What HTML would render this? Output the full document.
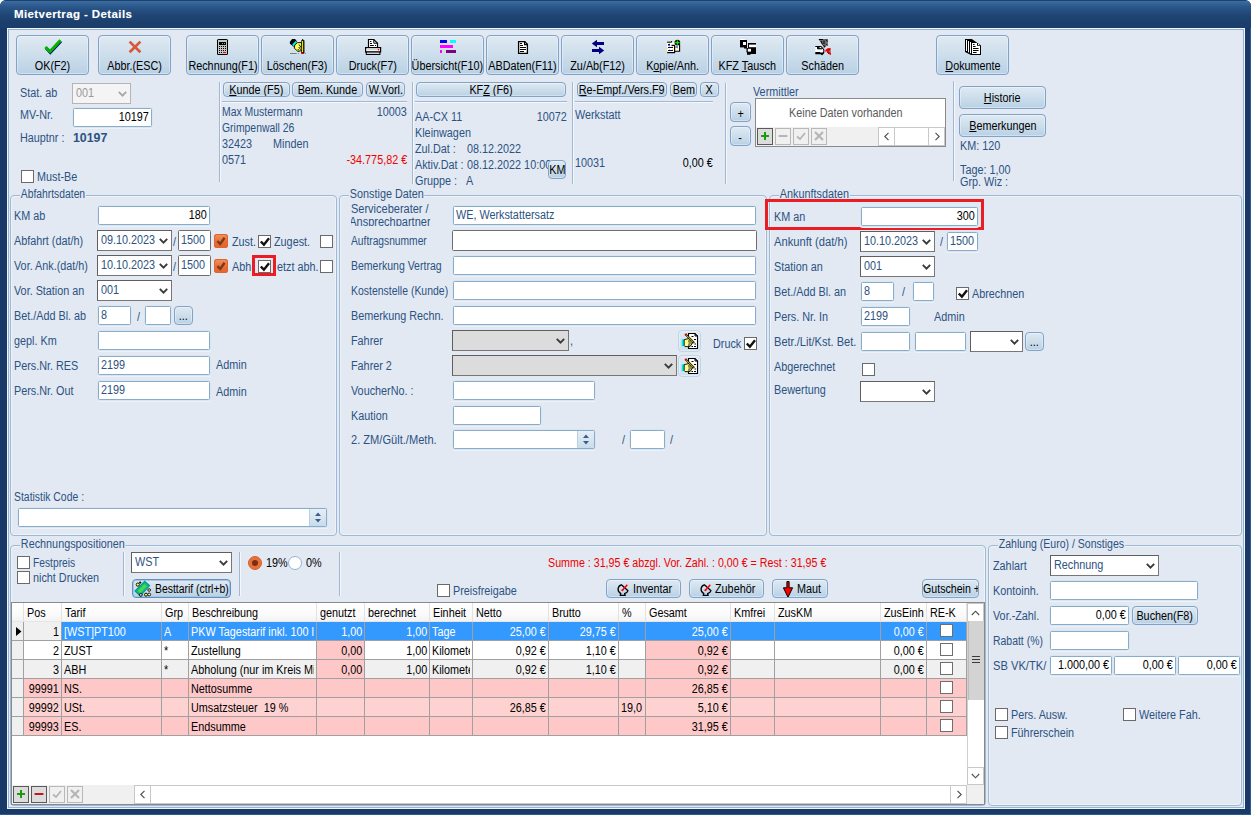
<!DOCTYPE html>
<html><head><meta charset="utf-8"><title>Mietvertrag - Details</title>
<style>
html,body{margin:0;padding:0}
html{background:#fff}
body{width:1251px;height:815px;overflow:hidden;position:relative;background:#193a68;box-shadow:inset -1px -1px 0 #2d5c92;border-radius:6px 6px 0 0;font-family:"Liberation Sans",sans-serif;font-size:12.5px;color:#000}
.t{display:inline-block;transform:scaleX(.865);transform-origin:0 50%;white-space:nowrap}
.t.tr{transform-origin:100% 50%}
.t.tc{transform-origin:50% 50%}
#title{position:absolute;left:0;top:0;width:1251px;height:28px;border-radius:6px 6px 0 0;background:linear-gradient(#1d3f6d 0,#1d3f6d 1px,#3d6ea0 1px,#35659a 3px,#2a568a 7px,#204776 14px,#1c3f6d 22px,#1b3d6a 28px)}
#title span{position:absolute;left:14px;top:7px;font-weight:bold;font-size:11.5px;line-height:14px;color:#fff;letter-spacing:.4px;text-shadow:0 0 1px rgba(255,255,255,.3)}
#cl{position:absolute;left:7px;top:28px;width:1238px;height:781px;box-sizing:border-box;border:1px solid #f2f6fa;background:#e2e9f2}
#cl2{position:absolute;left:8px;top:29px;width:1236px;height:779px;box-sizing:border-box;border:1px solid #94b3d1}
.l{position:absolute;white-space:nowrap;line-height:14px;color:#2c5282}
.bk,.i.bk{color:#000}
.red{color:#f00000}
.i{position:absolute;box-sizing:border-box;border:1px solid #88adcc;border-radius:1.5px;background:#fff;white-space:nowrap;overflow:hidden;padding:0 2px;color:#2c5282;box-shadow:0 0 0 1px #dae5ef,0 1px 0 1px #edf2f8}
.i.dk{border-color:#6e6e6e;box-shadow:none}
.c{position:absolute;box-sizing:border-box;border:1px solid #5f5f5f;background:#fff;white-space:nowrap;overflow:hidden;padding:0 3px;color:#2c5282;border-bottom-color:#777;border-right-color:#777}
.c .cv{position:absolute;right:3px;top:50%;margin-top:-3px}
.c.dis .cv path{stroke:#a8a8a8}
.c.dis{background:#f4f4f4;border-color:#b5b5b5;color:#9a9a9a}
.c.gr{background:#dcdcdc}
.b{position:absolute;box-sizing:border-box;border:1px solid #7fa3c9;border-radius:4px;background:linear-gradient(#dfe9f2,#cfdfec 45%,#b9d1e5);text-align:center;white-space:nowrap;color:#000;overflow:hidden;box-shadow:inset 0 0 0 1px rgba(255,255,255,.35)}
.b.sm{border-radius:4px}
.tb .ic{position:absolute;left:0;right:0;top:3px;height:18px;display:flex;align-items:center;justify-content:center}
.tb .tx{position:absolute;left:-40px;right:-40px;top:23px;line-height:14px}
u{text-decoration:underline}
.k{position:absolute;box-sizing:border-box;border:1px solid #6a6a6a;background:#fff}
.k svg{position:absolute;left:0;top:0}
.ok{position:absolute;width:14px;height:14px;border-radius:3px;background:linear-gradient(#f39463,#e86f38 50%,#e2642c);box-shadow:inset 0 0 0 1px #dc6632}
.g{position:absolute;box-sizing:border-box;border:1px solid #9db9d5;border-radius:4px;box-shadow:inset 1px 1px 0 #eef3f8, inset -1px -1px 0 #eef3f8}
.gt{background:#e2e9f2;padding:0 1px;transform:scaleX(.865);transform-origin:0 50%}
.sp{position:absolute;right:0;top:0;bottom:0;width:16px;background:linear-gradient(#e6eef6,#c9dcec);border-left:1px solid #b9cfe4}
table{border-collapse:collapse}
</style></head><body>
<div id="title"><span>Mietvertrag - Details</span></div>
<div id="cl"></div><div id="cl2"></div>

<div class="b tb" style="left:16px;top:35px;width:73px;height:40px"><div class="tx"><span class="t tc">OK(F2)</span></div></div>
<svg style="position:absolute;left:40px;top:36px" width="26" height="20" viewBox="40 36 26 20"><path d="M45.9 47.8 L50.3 52.6 L60.9 41.2" fill="none" stroke="#000080" stroke-width="3"/><path d="M45.4 47 L50 51.6 L60.5 40.4" fill="none" stroke="#00b400" stroke-width="3"/></svg>
<div class="b tb" style="left:98px;top:35px;width:73px;height:40px"><div class="tx"><span class="t tc">Abbr.(ESC)</span></div></div>
<svg style="position:absolute;left:125px;top:38px" width="20" height="18" viewBox="125 38 20 18"><path d="M129.6 41.6 L140.4 52.2 M140.4 41.6 L129.6 52.2" fill="none" stroke="#d9573a" stroke-width="2.7"/></svg>
<div class="b tb" style="left:186px;top:35px;width:73px;height:40px"><div class="tx"><span class="t tc">Rechnung(F1)</span></div></div>
<svg style="position:absolute;left:216px;top:38px" width="14" height="18" viewBox="216 38 14 18"><rect x="217" y="39" width="11" height="16" rx="1.6" fill="#000"/><rect x="218" y="40" width="9" height="14" fill="#c4c4c4"/><rect x="219" y="42" width="7" height="3" fill="#000"/><rect x="222" y="43" width="1" height="1" fill="#00e8e8"/><rect x="224" y="43" width="1" height="1" fill="#00e8e8"/><g fill="#000"><rect x="219" y="46" width="1" height="1"/><rect x="221" y="46" width="1" height="1"/><rect x="223" y="46" width="1" height="1"/><rect x="225" y="46" width="1" height="1"/><rect x="219" y="48" width="1" height="1"/><rect x="221" y="48" width="1" height="1"/><rect x="223" y="48" width="1" height="1"/><rect x="225" y="48" width="1" height="1"/><rect x="219" y="50" width="1" height="1"/><rect x="221" y="50" width="1" height="1"/><rect x="223" y="50" width="1" height="1"/><rect x="225" y="50" width="1" height="1"/><rect x="219" y="52" width="1" height="1"/><rect x="221" y="52" width="1" height="1"/></g><rect x="223" y="52" width="3" height="1" fill="#f00"/></svg>
<div class="b tb" style="left:261px;top:35px;width:73px;height:40px"><div class="tx"><span class="t tc">Löschen(F3)</span></div></div>
<svg style="position:absolute;left:284px;top:36px" width="30" height="22" viewBox="0 0 30 22"><polygon points="5.9,5.7 8.1,3 11.1,3 13,5.4 9.7,10.8 5.9,7.8" fill="#000"/><polygon points="8.1,8.4 11.6,5 13.2,6.6 9.7,10.3" fill="#00f0f0"/><polygon points="10.8,8.9 13.5,6.6 17.3,6.6 18.6,12.2 18.6,14.3 14,15.5 10.3,12.2" fill="#ffff55" stroke="#000" stroke-width=".9"/><path d="M15 8.5 L17.5 12 M14.8 11 L16.8 13.8 M13.8 13 L15 14.6" stroke="#000" stroke-width=".9"/><rect x="17.7" y="4.6" width="2.2" height="12" fill="#ff0" stroke="#000" stroke-width=".8"/><rect x="18.2" y="3" width="1" height="1.8" fill="#000"/><rect x="19.3" y="4.6" width="0.9" height="12.4" fill="#000"/><rect x="17" y="16.9" width="3.2" height="1.1" fill="#f00"/><rect x="6" y="17" width="6.7" height="1" fill="#808080"/><rect x="14" y="17" width="1" height="1" fill="#909090"/><rect x="21" y="17" width="1" height="1" fill="#909090"/></svg>
<div class="b tb" style="left:336px;top:35px;width:73px;height:40px"><div class="tx"><span class="t tc">Druck(F7)</span></div></div>
<svg style="position:absolute;left:358px;top:36px" width="30" height="22" viewBox="0 0 30 22"><polygon points="10.5,3.5 15.8,3.5 19.5,7.2 19.5,11.5 10.5,11.5" fill="#fff" stroke="#000" stroke-width="1.2"/><path d="M15.8 3.5 V7.2 H19.5" fill="none" stroke="#000" stroke-width="1"/><path d="M12 5.5 H13.4 M12 7.5 H14 M12 9.5 H15.8 M17 9.5 H18" stroke="#000" stroke-width="1"/><rect x="7.6" y="11.6" width="15" height="4.4" fill="#fff" stroke="#000" stroke-width="1.2"/><path d="M9.5 13.6 H19" stroke="#bbb" stroke-width="1.4" stroke-dasharray="1.2 .8"/><circle cx="20.5" cy="13.6" r=".9" fill="#f00"/><rect x="8.3" y="16" width="13.6" height="2.5" fill="#d4d4d4" stroke="#000" stroke-width="1"/></svg>
<div class="b tb" style="left:411px;top:35px;width:73px;height:40px"><div class="tx"><span class="t tc">Übersicht(F10)</span></div></div>
<svg style="position:absolute;left:438px;top:38px" width="20" height="17" viewBox="438 38 20 17" shape-rendering="crispEdges"><rect x="440" y="40" width="7" height="3" fill="#0000ff"/><rect x="450" y="40" width="6" height="3" fill="#00ffff"/><rect x="440" y="45" width="13" height="3" fill="#ff00ff"/><rect x="440" y="50" width="2" height="3" fill="#ff00ff"/><rect x="446" y="50" width="10" height="3" fill="#800080"/></svg>
<div class="b tb" style="left:486px;top:35px;width:73px;height:40px"><div class="tx"><span class="t tc">ABDaten(F11)</span></div></div>
<svg style="position:absolute;left:516px;top:39px" width="14" height="17" viewBox="516 39 14 17"><polygon points="518.6,41.6 524.8,41.6 527.4,44.2 527.4,53.4 518.6,53.4" fill="#fff" stroke="#000" stroke-width="1.3"/><path d="M524.6 41.6 V44.6 H527.4" fill="none" stroke="#000" stroke-width="1.2"/><path d="M520 43.5 H522 M520 45.5 H523 M520 47.5 H526 M520 49.5 H526 M520 51.5 H524" stroke="#000" stroke-width="1"/></svg>
<div class="b tb" style="left:561px;top:35px;width:73px;height:40px"><div class="tx"><span class="t tc">Zu/Ab(F12)</span></div></div>
<svg style="position:absolute;left:590px;top:38px" width="16" height="18" viewBox="590 38 16 18"><polygon points="591.8,43.5 597,39.8 597,42 604,42 604,45 597,45 597,47.2" fill="#000080"/><polygon points="604.2,50.5 599,46.8 599,49 592,49 592,52 599,52 599,54.2" fill="#000080"/></svg>
<div class="b tb" style="left:636px;top:35px;width:73px;height:40px"><div class="tx"><span class="t tc">K<u>o</u>pie/Anh.</span></div></div>
<svg style="position:absolute;left:657px;top:36px" width="30" height="22" viewBox="0 0 30 22"><rect x="17.5" y="6" width="5" height="9" fill="#fff"/><path d="M22.6 8 V15.2 H17.5" fill="none" stroke="#000" stroke-width="1.1"/><path d="M18.5 8.5 H20 M18.5 11 H21" stroke="#000090" stroke-width="1"/><rect x="10" y="6.5" width="7.5" height="10" fill="#fff"/><path d="M10 6.2 H14.6 L14.6 5" fill="none" stroke="#000" stroke-width="1"/><path d="M14.5 9.3 H17.6 V16.6 H10" fill="none" stroke="#000" stroke-width="1.2"/><rect x="11" y="8" width="2" height="1.6" fill="#000090"/><path d="M11 11.5 H16 M11 14.5 H16" stroke="#000090" stroke-width="1"/><g fill="#f5e500"><rect x="12" y="7" width="1" height="1"/><rect x="15" y="8" width="1" height="1"/><rect x="10" y="12" width="1" height="1"/><rect x="12" y="13" width="1" height="1"/><rect x="15" y="13" width="1" height="1"/><rect x="10" y="15.3" width="1" height="1"/><rect x="12" y="10" width="1" height="1"/><rect x="15" y="10" width="1" height="1"/><rect x="18" y="13" width="1" height="1"/><rect x="20" y="12" width="1" height="1"/><rect x="17" y="5" width="1" height="1"/></g><circle cx="20.4" cy="6.6" r="2.8" fill="#000"/><path d="M20.4 4.4 V8.8 M18.2 6.6 H22.6" stroke="#00f000" stroke-width="1.3"/></svg>
<div class="b tb" style="left:711px;top:35px;width:73px;height:40px"><div class="tx"><span class="t tc">KFZ <u>T</u>ausch</span></div></div>
<svg style="position:absolute;left:738px;top:38px" width="20" height="18" viewBox="738 38 20 18"><rect x="740" y="40" width="7" height="7.4" fill="#000"/><rect x="740.3" y="39" width="4.5" height="1" fill="#fff"/><rect x="743" y="42" width="3" height="3" fill="#fff"/><rect x="744" y="47" width="3" height="1.5" fill="#000"/><rect x="748" y="43" width="8" height="11" fill="#000"/><rect x="749" y="44.6" width="7" height="2.6" fill="#fff"/><rect x="746.5" y="48" width="5" height="4.5" fill="#000"/><rect x="747.8" y="48.8" width="3.2" height="2.8" fill="#fff"/><rect x="747" y="52" width="3.5" height="2.8" fill="#000"/></svg>
<div class="b tb" style="left:786px;top:35px;width:73px;height:40px"><div class="tx"><span class="t tc">Schäden</span></div></div>
<svg style="position:absolute;left:807px;top:36px" width="30" height="22" viewBox="0 0 30 22"><polygon points="11.3,3 21,3 20.8,8.5 17,12.6 15.5,9" fill="#6c6c6c"/><path d="M12 3.5 H16 M14 5 L15.5 8.5 M17 4.5 V8 M19 3.5 L20.5 5.5 M16.5 9 L18 11 M19.5 8 L20.5 9.5" stroke="#000" stroke-width="1"/><path d="M8.3 10.5 H14 L16.8 13.6 V16.2 L15.6 17.6 H8.3" fill="#fff" stroke="#000" stroke-width="1.1"/><path d="M10.5 10.6 V12.8 H15 M8.3 16.5 H13 L14.5 18.6 H15.6 L16.6 16.5" fill="#000" stroke="#000" stroke-width="1"/><polygon points="18.3,14 20.5,12.3 23.6,12 23.8,13.5 22,14.8 24,17 24,19 22.5,18.6 21,16.8 19.8,15.6 18.2,15.8" fill="#f00"/><path d="M22 13 L23.5 15.5 M20 16 L22 18" stroke="#222" stroke-width=".9"/></svg>
<div class="b tb" style="left:936px;top:35px;width:73px;height:40px"><div class="tx"><span class="t tc"><u>D</u>okumente</span></div></div>
<svg style="position:absolute;left:957px;top:36px" width="30" height="22" viewBox="0 0 30 22"><polygon points="8,3 14.8,3 24,9.4 24,19 14,19 8,16" fill="#000"/><rect x="9" y="4" width="1" height="11" fill="#fff"/><rect x="11" y="5" width="1" height="11.3" fill="#fff"/><rect x="13" y="6" width="1" height="11.3" fill="#fff"/><polygon points="15,7 20,7 20,9.7 23,9.7 23,18 15,18" fill="#fff"/><rect x="21" y="8" width="1" height="1" fill="#fff"/><path d="M16 8.5 H17.6 M16 10.5 H18.6 M16 12.5 H21.6 M16 14.5 H21.6 M16 16.5 H19.6" stroke="#000" stroke-width="1"/></svg>
<div class="l " style="left:20px;top:86px;"><span class="t">Stat. ab</span></div>
<div class="c dis" style="left:72px;top:83px;width:59px;height:21px;line-height:18px;"><span class="t">001</span><svg class="cv" width="9" height="6" viewBox="0 0 9 6"><path d="M0.8 0.8 L4.5 4.6 L8.2 0.8" fill="none" stroke="#3a3a3a" stroke-width="1.9"/></svg></div>
<div class="l " style="left:20px;top:108px;"><span class="t">MV-Nr.</span></div>
<div class="i bk" style="left:73px;top:108px;width:79px;height:19px;line-height:17px;"><div style="position:absolute;right:2px;top:0"><span class="t tr">10197</span></div></div>
<div class="l " style="left:20px;top:131px;"><span class="t">Hauptnr :</span></div>
<div class="l " style="left:73px;top:131px;font-weight:bold;font-size:13px"><span class="t" style="transform:scaleX(0.95)">10197</span></div>
<div class="k" style="left:21px;top:170px;width:13px;height:13px"></div>
<div class="l " style="left:37px;top:170px;"><span class="t">Must-Be</span></div>
<div style="position:absolute;left:219px;top:82px;width:1px;height:100px;background:#9fb8d3;box-shadow:1px 0 0 #f4f8fc"></div>
<div class="b sm" style="left:223px;top:82px;width:67px;height:15px;line-height:13px;"><div style="position:absolute;left:-40px;right:-40px;top:1px"><span class="t tc"><u>K</u>unde (F5)</span></div></div>
<div class="b sm" style="left:292px;top:82px;width:71px;height:15px;line-height:13px;"><div style="position:absolute;left:-40px;right:-40px;top:1px"><span class="t tc">Bem. Kunde</span></div></div>
<div class="b sm" style="left:366px;top:82px;width:39px;height:15px;line-height:13px;"><div style="position:absolute;left:-40px;right:-40px;top:1px"><span class="t tc">W.Vorl.</span></div></div>
<div style="position:absolute;left:222px;top:101px;height:1px;width:185px;background:#9fb8d3;box-shadow:0 1px 0 #f4f8fc"></div>
<div class="l " style="left:222px;top:105px;"><span class="t" style="transform:scaleX(0.834)">Max Mustermann</span></div>
<div class="l " style="right:844px;top:105px;"><span class="t tr">10003</span></div>
<div class="l " style="left:222px;top:121px;"><span class="t" style="transform:scaleX(0.833)">Grimpenwall 26</span></div>
<div class="l " style="left:222px;top:137px;"><span class="t">32423</span></div>
<div class="l " style="left:273px;top:137px;"><span class="t">Minden</span></div>
<div class="l " style="left:222px;top:153px;"><span class="t">0571</span></div>
<div class="l red" style="right:844px;top:153px;"><span class="t tr">-34.775,82 €</span></div>
<div style="position:absolute;left:412px;top:82px;width:1px;height:102px;background:#9fb8d3;box-shadow:1px 0 0 #f4f8fc"></div>
<div class="b sm" style="left:416px;top:82px;width:150px;height:15px;line-height:13px;"><div style="position:absolute;left:-40px;right:-40px;top:1px"><span class="t tc">KF<u>Z</u> (F6)</span></div></div>
<div style="position:absolute;left:415px;top:101px;height:1px;width:152px;background:#9fb8d3;box-shadow:0 1px 0 #f4f8fc"></div>
<div class="l " style="left:415px;top:110px;"><span class="t">AA-CX 11</span></div>
<div class="l " style="right:684px;top:110px;"><span class="t tr">10072</span></div>
<div class="l " style="left:415px;top:126px;"><span class="t">Kleinwagen</span></div>
<div class="l " style="left:415px;top:142px;"><span class="t">Zul.Dat :</span></div>
<div class="l " style="left:467px;top:142px;"><span class="t">08.12.2022</span></div>
<div class="l " style="left:415px;top:158px;"><span class="t">Aktiv.Dat :</span></div>
<div class="l " style="left:467px;top:158px;"><span class="t">08.12.2022 10:00</span></div>
<div class="l " style="left:415px;top:174px;"><span class="t">Gruppe :</span></div>
<div class="l " style="left:466px;top:174px;"><span class="t">A</span></div>
<div class="b sm" style="left:548px;top:160px;width:18px;height:19px;line-height:17px;border-radius:4px"><div style="position:absolute;left:-40px;right:-40px;top:1px"><span class="t tc">KM</span></div></div>
<div style="position:absolute;left:572px;top:82px;width:1px;height:102px;background:#9fb8d3;box-shadow:1px 0 0 #f4f8fc"></div>
<div class="b sm" style="left:577px;top:82px;width:90px;height:15px;line-height:13px;"><div style="position:absolute;left:-40px;right:-40px;top:1px"><span class="t tc"><u>R</u>e-Empf./Vers.F9</span></div></div>
<div class="b sm" style="left:670px;top:82px;width:27px;height:15px;line-height:13px;"><div style="position:absolute;left:-40px;right:-40px;top:1px"><span class="t tc">Bem</span></div></div>
<div class="b sm" style="left:700px;top:82px;width:19px;height:15px;line-height:13px;"><div style="position:absolute;left:-40px;right:-40px;top:1px"><span class="t tc">X</span></div></div>
<div style="position:absolute;left:575px;top:101px;height:1px;width:138px;background:#9fb8d3;box-shadow:0 1px 0 #f4f8fc"></div>
<div class="l " style="left:575px;top:108px;"><span class="t">Werkstatt</span></div>
<div class="l " style="left:575px;top:156px;"><span class="t">10031</span></div>
<div class="l bk" style="right:538px;top:156px;"><span class="t tr">0,00 €</span></div>
<div style="position:absolute;left:725px;top:83px;width:1px;height:101px;background:#9fb8d3;box-shadow:1px 0 0 #f4f8fc"></div>
<div class="b " style="left:730px;top:102px;width:21px;height:20px;line-height:18px;"><div style="position:absolute;left:-40px;right:-40px;top:2px"><span class="t tc">+</span></div></div>
<div class="b " style="left:730px;top:126px;width:21px;height:20px;line-height:18px;"><div style="position:absolute;left:-40px;right:-40px;top:2px"><span class="t tc">-</span></div></div>
<div class="l " style="left:753px;top:85px;"><span class="t">Vermittler</span></div>
<div style="position:absolute;left:755px;top:98px;width:191px;height:49px;box-sizing:border-box;border:1px solid #8a8a8a;background:#fff"><div style="position:absolute;left:0;right:0;top:28px;bottom:0;background:#f0f0f0"></div></div>
<div class="l " style="left:789px;top:106px;color:#5a5a5a"><span class="t">Keine Daten vorhanden</span></div>
<div style="position:absolute;left:757px;top:128px;width:16px;height:17px;box-sizing:border-box;border:1px solid #5a5a5a;background:#dcdcdc"><svg width="16" height="16" viewBox="0 0 16 16" style="position:absolute;left:-1px;top:-1px"><path d="M8 4 V12 M4 8 H12" stroke="#1d9a12" stroke-width="2"/></svg></div>
<div style="position:absolute;left:775px;top:128px;width:16px;height:17px;box-sizing:border-box;border:1px solid #b8b8b8;background:#f0f0f0"><svg width="16" height="16" viewBox="0 0 16 16" style="position:absolute;left:-1px;top:-1px"><path d="M3.6 8 H12.4" stroke="#b5b5b5" stroke-width="2"/></svg></div>
<div style="position:absolute;left:793px;top:128px;width:16px;height:17px;box-sizing:border-box;border:1px solid #b8b8b8;background:#f0f0f0"><svg width="16" height="16" viewBox="0 0 16 16" style="position:absolute;left:-1px;top:-1px"><path d="M4 8.5 L7 11 L12 5" fill="none" stroke="#b5b5b5" stroke-width="1.8"/></svg></div>
<div style="position:absolute;left:811px;top:128px;width:16px;height:17px;box-sizing:border-box;border:1px solid #b8b8b8;background:#f0f0f0"><svg width="16" height="16" viewBox="0 0 16 16" style="position:absolute;left:-1px;top:-1px"><path d="M4 4 L12 12 M12 4 L4 12" stroke="#b5b5b5" stroke-width="2.2"/></svg></div>
<div style="position:absolute;left:878px;top:127px;width:67px;height:19px;background:#fff;box-sizing:border-box;border:1px solid #c8c8c8"></div>
<div style="position:absolute;left:878px;top:127px;width:17px;height:19px;box-sizing:border-box;border:1px solid #c8c8c8;background:#fff;display:flex;align-items:center;justify-content:center"><svg width="8" height="9" viewBox="0 0 8 9"><path d="M5.5 0.8 L1.8 4.5 L5.5 8.2" fill="none" stroke="#505050" stroke-width="1.15"/></svg></div>
<div style="position:absolute;left:928px;top:127px;width:17px;height:19px;box-sizing:border-box;border:1px solid #c8c8c8;background:#fff;display:flex;align-items:center;justify-content:center"><svg width="8" height="9" viewBox="0 0 8 9"><path d="M2.5 0.8 L6.2 4.5 L2.5 8.2" fill="none" stroke="#505050" stroke-width="1.15"/></svg></div>
<div style="position:absolute;left:953px;top:81px;width:1px;height:100px;background:#9fb8d3;box-shadow:1px 0 0 #f4f8fc"></div>
<div class="b " style="left:959px;top:86px;width:87px;height:23px;line-height:21px;"><div style="position:absolute;left:-40px;right:-40px;top:1px"><span class="t tc"><u>H</u>istorie</span></div></div>
<div class="b " style="left:959px;top:114px;width:87px;height:23px;line-height:21px;"><div style="position:absolute;left:-40px;right:-40px;top:1px"><span class="t tc"><u>B</u>emerkungen</span></div></div>
<div class="l " style="left:960px;top:139px;"><span class="t">KM: 120</span></div>
<div class="l " style="left:960px;top:163px;"><span class="t">Tage: 1,00</span></div>
<div class="l " style="left:960px;top:175px;"><span class="t">Grp. Wiz :</span></div>
<div class="g" style="left:10px;top:195px;width:327px;height:341px"></div>
<div class="l gt" style="left:20px;top:187px;transform:scaleX(0.826)">Abfahrtsdaten</div>
<div class="l " style="left:14px;top:209px;"><span class="t">KM ab</span></div>
<div class="i bk" style="left:98px;top:206px;width:112px;height:19px;line-height:17px;"><div style="position:absolute;right:2px;top:0"><span class="t tr">180</span></div></div>
<div class="l " style="left:14px;top:234px;"><span class="t">Abfahrt (dat/h)</span></div>
<div class="c " style="left:97px;top:230px;width:75px;height:21px;line-height:18px;"><span class="t">09.10.2023</span><svg class="cv" width="9" height="6" viewBox="0 0 9 6"><path d="M0.8 0.8 L4.5 4.6 L8.2 0.8" fill="none" stroke="#3a3a3a" stroke-width="1.9"/></svg></div>
<div class="l " style="left:173px;top:235px;"><span class="t">/</span></div>
<div class="i dk" style="left:178px;top:230px;width:33px;height:21px;line-height:19px;"><span class="t">1500</span></div>
<div class="ok" style="left:214px;top:234px"><svg width="14" height="14" viewBox="0 0 14 14"><path d="M3.4 7.2 L6.2 10 L10.6 3.8" fill="none" stroke="#7a3a1a" stroke-width="2.4"/></svg></div>
<div class="l " style="left:232px;top:235px;"><span class="t">Zust.</span></div>
<div class="k" style="left:258px;top:235px;width:13px;height:13px"><svg width="11" height="11" viewBox="0 0 11 11"><path d="M1.8 5.5 L4.9 8.7 L10 2.2" fill="none" stroke="#111" stroke-width="2.4"/></svg></div>
<div class="l " style="left:274px;top:235px;"><span class="t">Zugest.</span></div>
<div class="k" style="left:320px;top:235px;width:13px;height:13px"></div>
<div class="l " style="left:14px;top:259px;"><span class="t">Vor. Ank.(dat/h)</span></div>
<div class="c " style="left:97px;top:255px;width:75px;height:21px;line-height:18px;"><span class="t">10.10.2023</span><svg class="cv" width="9" height="6" viewBox="0 0 9 6"><path d="M0.8 0.8 L4.5 4.6 L8.2 0.8" fill="none" stroke="#3a3a3a" stroke-width="1.9"/></svg></div>
<div class="l " style="left:173px;top:260px;"><span class="t">/</span></div>
<div class="i dk" style="left:178px;top:255px;width:33px;height:21px;line-height:19px;"><span class="t">1500</span></div>
<div class="ok" style="left:214px;top:259px"><svg width="14" height="14" viewBox="0 0 14 14"><path d="M3.4 7.2 L6.2 10 L10.6 3.8" fill="none" stroke="#7a3a1a" stroke-width="2.4"/></svg></div>
<div class="l " style="left:232px;top:260px;"><span class="t">Abh</span></div>
<div style="position:absolute;left:252px;top:255px;width:24px;height:21px;box-sizing:border-box;border:3px solid #ec1c24;background:#e2e9f2"></div>
<div class="k" style="left:258px;top:260px;width:13px;height:13px"><svg width="11" height="11" viewBox="0 0 11 11"><path d="M1.8 5.5 L4.9 8.7 L10 2.2" fill="none" stroke="#111" stroke-width="2.4"/></svg></div>
<div class="l " style="left:277px;top:260px;"><span class="t">etzt abh.</span></div>
<div class="k" style="left:320px;top:260px;width:13px;height:13px"></div>
<div class="l " style="left:14px;top:284px;"><span class="t">Vor. Station an</span></div>
<div class="c " style="left:97px;top:280px;width:75px;height:21px;line-height:18px;"><span class="t">001</span><svg class="cv" width="9" height="6" viewBox="0 0 9 6"><path d="M0.8 0.8 L4.5 4.6 L8.2 0.8" fill="none" stroke="#3a3a3a" stroke-width="1.9"/></svg></div>
<div class="l " style="left:14px;top:309px;"><span class="t">Bet./Add Bl. ab</span></div>
<div class="i " style="left:98px;top:306px;width:33px;height:19px;line-height:17px;"><span class="t">8</span></div>
<div class="l " style="left:137px;top:310px;"><span class="t">/</span></div>
<div class="i " style="left:145px;top:306px;width:26px;height:19px;line-height:17px;"></div>
<div class="b " style="left:174px;top:306px;width:19px;height:19px;line-height:17px;"><div style="position:absolute;left:-40px;right:-40px;top:1px"><span class="t tc">...</span></div></div>
<div class="l " style="left:14px;top:334px;"><span class="t">gepl. Km</span></div>
<div class="i " style="left:98px;top:331px;width:112px;height:19px;line-height:17px;"></div>
<div class="l " style="left:14px;top:359px;"><span class="t">Pers.Nr. RES</span></div>
<div class="i " style="left:98px;top:356px;width:112px;height:19px;line-height:17px;"><span class="t">2199</span></div>
<div class="l " style="left:216px;top:358px;"><span class="t">Admin</span></div>
<div class="l " style="left:14px;top:384px;"><span class="t">Pers.Nr. Out</span></div>
<div class="i " style="left:98px;top:381px;width:112px;height:19px;line-height:17px;"><span class="t">2199</span></div>
<div class="l " style="left:216px;top:385px;"><span class="t">Admin</span></div>
<div class="l " style="left:14px;top:490px;"><span class="t" style="transform:scaleX(0.833)">Statistik Code :</span></div>
<div class="i " style="left:18px;top:508px;width:309px;height:19px;line-height:17px;"><div class="sp"><svg width="16" height="17" viewBox="0 0 16 17" style="position:absolute;left:0;top:0"><path d="M5 7 L8 3.5 L11 7Z M5 10 L8 13.5 L11 10Z" fill="#3b5f8c"/></svg></div></div>
<div class="g" style="left:339px;top:195px;width:428px;height:341px"></div>
<div class="l gt" style="left:349px;top:187px;transform:scaleX(0.865)">Sonstige Daten</div>
<div class="l" style="left:351px;top:203px;height:23px;overflow:hidden;line-height:13px;transform:scaleX(.88);transform-origin:0 50%">Serviceberater /<br><span style="margin-left:-2px">Ansprechpartner</span></div>
<div class="i " style="left:453px;top:206px;width:303px;height:19px;line-height:17px;"><span class="t">WE, Werkstattersatz</span></div>
<div class="l " style="left:351px;top:234px;"><span class="t" style="transform:scaleX(0.82)">Auftragsnummer</span></div>
<div class="i dk" style="left:452px;top:230px;width:305px;height:21px;line-height:19px;"></div>
<div class="l " style="left:351px;top:259px;"><span class="t" style="transform:scaleX(0.841)">Bemerkung Vertrag</span></div>
<div class="i " style="left:453px;top:256px;width:303px;height:19px;line-height:17px;"></div>
<div class="l " style="left:351px;top:284px;"><span class="t" style="transform:scaleX(0.837)">Kostenstelle (Kunde)</span></div>
<div class="i " style="left:453px;top:281px;width:303px;height:19px;line-height:17px;"></div>
<div class="l " style="left:351px;top:309px;"><span class="t">Bemerkung Rechn.</span></div>
<div class="i " style="left:453px;top:306px;width:303px;height:19px;line-height:17px;"></div>
<div class="l " style="left:351px;top:334px;"><span class="t">Fahrer</span></div>
<div class="c gr" style="left:452px;top:330px;width:117px;height:21px;line-height:18px;"><svg class="cv" width="9" height="6" viewBox="0 0 9 6"><path d="M0.8 0.8 L4.5 4.6 L8.2 0.8" fill="none" stroke="#3a3a3a" stroke-width="1.9"/></svg></div>
<div class="l " style="left:570px;top:334px;"><span class="t">,</span></div>
<div class="l " style="left:351px;top:359px;"><span class="t">Fahrer 2</span></div>
<div class="c gr" style="left:452px;top:355px;width:225px;height:21px;line-height:18px;"><svg class="cv" width="9" height="6" viewBox="0 0 9 6"><path d="M0.8 0.8 L4.5 4.6 L8.2 0.8" fill="none" stroke="#3a3a3a" stroke-width="1.9"/></svg></div>
<div class="b" style="left:678px;top:330px;width:23px;height:22px;border-color:#bfd6e8;background:linear-gradient(#dde9f3,#cfe0ee)"><div style="position:absolute;left:1px;top:1px"><svg width="20" height="18" viewBox="0 0 20 18"><polygon points="8.5,1.5 15,1.5 17.5,4 17.5,16.5 8.5,16.5" fill="#fff" stroke="#000" stroke-width="1.1"/><path d="M15 1.5 V4 H17.5" fill="none" stroke="#000" stroke-width="1"/><path d="M11.5 4.5 H13.5 M14 7.5 H16 M11.5 14.5 H13 M14 14.5 H16 M14.5 12 H16" stroke="#000" stroke-width="1"/><rect x="1.7" y="7.3" width="2.5" height="6.8" fill="#00e5ee"/><polygon points="4.2,7.6 9,6.6 12.6,9 12.6,11 10,14.6 5,14.6 4.2,13.6" fill="#ffff8a" stroke="#000" stroke-width=".9"/><path d="M8 9 H11.5 M8.5 11 H12 M8 13 H10.5" stroke="#000" stroke-width=".9"/><path d="M5.5 2.3 L14.2 10.9" stroke="#000" stroke-width="1.9"/><path d="M6.2 3 L13.6 10.3" stroke="#ffee00" stroke-width=".9"/><circle cx="5.6" cy="2.4" r="1" fill="#f00"/></svg></div></div>
<div class="b" style="left:678px;top:355px;width:23px;height:22px;border-color:#bfd6e8;background:linear-gradient(#dde9f3,#cfe0ee)"><div style="position:absolute;left:1px;top:1px"><svg width="20" height="18" viewBox="0 0 20 18"><polygon points="8.5,1.5 15,1.5 17.5,4 17.5,16.5 8.5,16.5" fill="#fff" stroke="#000" stroke-width="1.1"/><path d="M15 1.5 V4 H17.5" fill="none" stroke="#000" stroke-width="1"/><path d="M11.5 4.5 H13.5 M14 7.5 H16 M11.5 14.5 H13 M14 14.5 H16 M14.5 12 H16" stroke="#000" stroke-width="1"/><rect x="1.7" y="7.3" width="2.5" height="6.8" fill="#00e5ee"/><polygon points="4.2,7.6 9,6.6 12.6,9 12.6,11 10,14.6 5,14.6 4.2,13.6" fill="#ffff8a" stroke="#000" stroke-width=".9"/><path d="M8 9 H11.5 M8.5 11 H12 M8 13 H10.5" stroke="#000" stroke-width=".9"/><path d="M5.5 2.3 L14.2 10.9" stroke="#000" stroke-width="1.9"/><path d="M6.2 3 L13.6 10.3" stroke="#ffee00" stroke-width=".9"/><circle cx="5.6" cy="2.4" r="1" fill="#f00"/></svg></div></div>
<div class="l " style="left:713px;top:337px;"><span class="t">Druck</span></div>
<div class="k" style="left:744px;top:337px;width:13px;height:13px"><svg width="11" height="11" viewBox="0 0 11 11"><path d="M1.8 5.5 L4.9 8.7 L10 2.2" fill="none" stroke="#111" stroke-width="2.4"/></svg></div>
<div class="l " style="left:351px;top:384px;"><span class="t">VoucherNo. :</span></div>
<div class="i " style="left:453px;top:381px;width:142px;height:19px;line-height:17px;"></div>
<div class="l " style="left:351px;top:409px;"><span class="t">Kaution</span></div>
<div class="i " style="left:453px;top:406px;width:88px;height:19px;line-height:17px;"></div>
<div class="l " style="left:351px;top:433px;"><span class="t" style="transform:scaleX(0.887)">2. ZM/Gült./Meth.</span></div>
<div class="i " style="left:453px;top:430px;width:142px;height:19px;line-height:17px;"><div class="sp"><svg width="16" height="17" viewBox="0 0 16 17" style="position:absolute;left:0;top:0"><path d="M5 7 L8 3.5 L11 7Z M5 10 L8 13.5 L11 10Z" fill="#3b5f8c"/></svg></div></div>
<div class="l " style="left:622px;top:433px;"><span class="t">/</span></div>
<div class="i " style="left:630px;top:430px;width:35px;height:19px;line-height:17px;"></div>
<div class="l " style="left:670px;top:433px;"><span class="t">/</span></div>
<div class="g" style="left:769px;top:195px;width:473px;height:341px"></div>
<div class="l gt" style="left:779px;top:187px;transform:scaleX(0.865)">Ankunftsdaten</div>
<div style="position:absolute;left:765px;top:199px;width:219px;height:31px;box-sizing:border-box;border:3px solid #ec1c24"></div>
<div class="l " style="left:774px;top:210px;"><span class="t">KM an</span></div>
<div class="i bk" style="left:861px;top:207px;width:117px;height:19px;line-height:17px;"><div style="position:absolute;right:2px;top:0"><span class="t tr">300</span></div></div>
<div class="l " style="left:774px;top:235px;"><span class="t" style="transform:scaleX(0.895)">Ankunft (dat/h)</span></div>
<div class="c " style="left:860px;top:231px;width:75px;height:21px;line-height:18px;"><span class="t">10.10.2023</span><svg class="cv" width="9" height="6" viewBox="0 0 9 6"><path d="M0.8 0.8 L4.5 4.6 L8.2 0.8" fill="none" stroke="#3a3a3a" stroke-width="1.9"/></svg></div>
<div class="l " style="left:940px;top:235px;"><span class="t">/</span></div>
<div class="i " style="left:947px;top:232px;width:31px;height:19px;line-height:17px;"><span class="t">1500</span></div>
<div class="l " style="left:774px;top:260px;"><span class="t">Station an</span></div>
<div class="c " style="left:860px;top:256px;width:75px;height:21px;line-height:18px;"><span class="t">001</span><svg class="cv" width="9" height="6" viewBox="0 0 9 6"><path d="M0.8 0.8 L4.5 4.6 L8.2 0.8" fill="none" stroke="#3a3a3a" stroke-width="1.9"/></svg></div>
<div class="l " style="left:774px;top:285px;"><span class="t">Bet./Add Bl. an</span></div>
<div class="i " style="left:861px;top:282px;width:33px;height:19px;line-height:17px;"><span class="t">8</span></div>
<div class="l " style="left:902px;top:285px;"><span class="t">/</span></div>
<div class="i " style="left:913px;top:282px;width:21px;height:19px;line-height:17px;"></div>
<div class="k" style="left:956px;top:287px;width:13px;height:13px"><svg width="11" height="11" viewBox="0 0 11 11"><path d="M1.8 5.5 L4.9 8.7 L10 2.2" fill="none" stroke="#111" stroke-width="2.4"/></svg></div>
<div class="l " style="left:972px;top:287px;"><span class="t">Abrechnen</span></div>
<div class="l " style="left:774px;top:310px;"><span class="t">Pers. Nr. In</span></div>
<div class="i " style="left:861px;top:307px;width:49px;height:19px;line-height:17px;"><span class="t">2199</span></div>
<div class="l " style="left:934px;top:310px;"><span class="t">Admin</span></div>
<div class="l " style="left:774px;top:335px;"><span class="t" style="transform:scaleX(0.885)">Betr./Lit/Kst. Bet.</span></div>
<div class="i " style="left:861px;top:332px;width:49px;height:19px;line-height:17px;"></div>
<div class="i " style="left:915px;top:332px;width:51px;height:19px;line-height:17px;"></div>
<div class="c " style="left:970px;top:331px;width:53px;height:21px;line-height:18px;"><svg class="cv" width="9" height="6" viewBox="0 0 9 6"><path d="M0.8 0.8 L4.5 4.6 L8.2 0.8" fill="none" stroke="#3a3a3a" stroke-width="1.9"/></svg></div>
<div class="b " style="left:1025px;top:332px;width:19px;height:19px;line-height:17px;"><div style="position:absolute;left:-40px;right:-40px;top:1px"><span class="t tc">...</span></div></div>
<div class="l " style="left:774px;top:360px;"><span class="t">Abgerechnet</span></div>
<div class="k" style="left:862px;top:363px;width:13px;height:13px"></div>
<div class="l " style="left:774px;top:383px;"><span class="t">Bewertung</span></div>
<div class="c " style="left:860px;top:381px;width:75px;height:21px;line-height:18px;"><svg class="cv" width="9" height="6" viewBox="0 0 9 6"><path d="M0.8 0.8 L4.5 4.6 L8.2 0.8" fill="none" stroke="#3a3a3a" stroke-width="1.9"/></svg></div>
<div class="g" style="left:10px;top:545px;width:976px;height:261px"></div>
<div class="l gt" style="left:20px;top:537px;transform:scaleX(0.865)">Rechnungspositionen</div>
<div class="k" style="left:17px;top:556px;width:13px;height:13px"></div>
<div class="l " style="left:33px;top:556px;"><span class="t" style="transform:scaleX(0.82)">Festpreis</span></div>
<div class="k" style="left:17px;top:571px;width:13px;height:13px"></div>
<div class="l " style="left:33px;top:571px;"><span class="t">nicht Drucken</span></div>
<div style="position:absolute;left:123px;top:552px;width:1px;height:44px;background:#9fb8d3;box-shadow:1px 0 0 #f4f8fc"></div>
<div class="c " style="left:131px;top:552px;width:101px;height:21px;line-height:18px;"><span class="t">WST</span><svg class="cv" width="9" height="6" viewBox="0 0 9 6"><path d="M0.8 0.8 L4.5 4.6 L8.2 0.8" fill="none" stroke="#3a3a3a" stroke-width="1.9"/></svg></div>
<div class="b" style="left:132px;top:579px;width:99px;height:19px;line-height:17px;border-color:#5f90c2;box-shadow:inset 0 0 0 1px #a8c6e2"><div style="position:absolute;left:1px;top:0px"><svg width="18" height="17" viewBox="0 0 18 17"><polygon points="1.1,11 10.7,1.4 15.5,5.6 6.2,15.8" fill="#18b870" stroke="#00999c" stroke-width="1.2"/><polygon points="3.6,11 10.5,4.1 13,6.3 6.3,13.2" fill="#3ddc55"/><circle cx="6.2" cy="2.6" r="1.1" fill="#000"/><circle cx="3.8" cy="4.6" r="1.6" fill="#ffff40" stroke="#000" stroke-width=".9"/><circle cx="15.2" cy="10" r="1.3" fill="#fff" stroke="#000" stroke-width=".9"/><circle cx="6.9" cy="14.9" r="1.4" fill="#f4eaea" stroke="#000" stroke-width=".9"/><circle cx="12" cy="14.7" r="1.5" fill="#ffff40" stroke="#000" stroke-width=".9"/><circle cx="15.2" cy="14.5" r="1.4" fill="#fff" stroke="#000" stroke-width=".9"/></svg></div><span class="t" style="position:absolute;left:22px;top:1px;transform:scaleX(.833)">Besttarif (ctrl+b)</span></div>
<div style="position:absolute;left:239px;top:552px;width:1px;height:44px;background:#9fb8d3;box-shadow:1px 0 0 #f4f8fc"></div>
<div style="position:absolute;left:248px;top:556px;width:14px;height:14px;border-radius:50%;box-sizing:border-box;background:#e8713a;border:1px solid #d7602c"><div style="position:absolute;left:3px;top:3px;width:6px;height:6px;border-radius:50%;background:#7a2e12"></div></div>
<div class="l bk" style="left:266px;top:556px;"><span class="t">19%</span></div>
<div style="position:absolute;left:288px;top:556px;width:14px;height:14px;border-radius:50%;box-sizing:border-box;background:#fff;border:1px solid #8fb4d9"></div>
<div class="l bk" style="left:306px;top:556px;"><span class="t">0%</span></div>
<div style="position:absolute;left:339px;top:552px;width:1px;height:44px;background:#9fb8d3;box-shadow:1px 0 0 #f4f8fc"></div>
<div class="k" style="left:437px;top:584px;width:13px;height:13px"></div>
<div class="l " style="left:453px;top:584px;"><span class="t">Preisfreigabe</span></div>
<div class="l red" style="left:548px;top:556px;"><span class="t" style="transform:scaleX(0.855)">Summe : 31,95 € abzgl. Vor. Zahl. : 0,00 € = Rest : 31,95 €</span></div>
<div class="b" style="left:606px;top:579px;width:75px;height:19px;line-height:17px"><div style="position:absolute;left:10px;top:4px"><svg width="13" height="13" viewBox="0 0 13 13"><path d="M4.4 0.8 C0.6 1.8 -0.4 7.2 3.8 9.6 L3.2 11.4 H8.2 L7.6 9.7 C9.2 9.1 10.7 7.8 11 6.7 Z" fill="none" stroke="#000" stroke-width="1.3" stroke-linejoin="round"/><path d="M10.3 0.8 L5.4 6.3" stroke="#f00" stroke-width="1.5"/><circle cx="5.3" cy="6.3" r="1" fill="#f00"/></svg></div><span class="t" style="position:absolute;left:26px;top:1px">Inventar</span></div>
<div class="b" style="left:689px;top:579px;width:75px;height:19px;line-height:17px"><div style="position:absolute;left:10px;top:4px"><svg width="13" height="13" viewBox="0 0 13 13"><path d="M4.4 0.8 C0.6 1.8 -0.4 7.2 3.8 9.6 L3.2 11.4 H8.2 L7.6 9.7 C9.2 9.1 10.7 7.8 11 6.7 Z" fill="none" stroke="#000" stroke-width="1.3" stroke-linejoin="round"/><path d="M10.3 0.8 L5.4 6.3" stroke="#f00" stroke-width="1.5"/><circle cx="5.3" cy="6.3" r="1" fill="#f00"/></svg></div><span class="t" style="position:absolute;left:25px;top:1px">Zubehör</span></div>
<div class="b" style="left:772px;top:579px;width:56px;height:19px;line-height:17px"><div style="position:absolute;left:10px;top:1px"><svg width="11" height="18" viewBox="0 0 11 18"><path d="M3.9 0.6 H6.1 V6.8 H9.6 L5 16.2 L0.4 6.8 H3.9Z" fill="#f00" stroke="#000" stroke-width="1"/></svg></div><span class="t" style="position:absolute;left:24px;top:1px">Maut</span></div>
<div class="b" style="left:922px;top:579px;width:57px;height:19px;line-height:17px;text-align:left"><span class="t" style="position:absolute;left:0px;top:1px;transform:scaleX(.85)">Gutschein +</span></div>
<div id="tbl" style="position:absolute;left:11px;top:602px;width:974px;height:203px;box-sizing:border-box;border:1px solid #8a8a8a;background:#fff"></div>
<div style="position:absolute;left:12px;top:603px;width:12px;height:19px;box-sizing:border-box;border-right:1px solid #e2e2e2;border-bottom:1px solid #e6e6e6;background:linear-gradient(#fff,#fbfbfb 60%,#f3f3f3);line-height:20px;padding-left:3px;white-space:nowrap;overflow:hidden"></div>
<div style="position:absolute;left:24px;top:603px;width:38px;height:19px;box-sizing:border-box;border-right:1px solid #e2e2e2;border-bottom:1px solid #e6e6e6;background:linear-gradient(#fff,#fbfbfb 60%,#f3f3f3);line-height:20px;padding-left:3px;white-space:nowrap;overflow:hidden"><span class="t">Pos</span></div>
<div style="position:absolute;left:62px;top:603px;width:100px;height:19px;box-sizing:border-box;border-right:1px solid #e2e2e2;border-bottom:1px solid #e6e6e6;background:linear-gradient(#fff,#fbfbfb 60%,#f3f3f3);line-height:20px;padding-left:3px;white-space:nowrap;overflow:hidden"><span class="t">Tarif</span></div>
<div style="position:absolute;left:162px;top:603px;width:27px;height:19px;box-sizing:border-box;border-right:1px solid #e2e2e2;border-bottom:1px solid #e6e6e6;background:linear-gradient(#fff,#fbfbfb 60%,#f3f3f3);line-height:20px;padding-left:3px;white-space:nowrap;overflow:hidden"><span class="t">Grp</span></div>
<div style="position:absolute;left:189px;top:603px;width:128px;height:19px;box-sizing:border-box;border-right:1px solid #e2e2e2;border-bottom:1px solid #e6e6e6;background:linear-gradient(#fff,#fbfbfb 60%,#f3f3f3);line-height:20px;padding-left:3px;white-space:nowrap;overflow:hidden"><span class="t">Beschreibung</span></div>
<div style="position:absolute;left:317px;top:603px;width:48px;height:19px;box-sizing:border-box;border-right:1px solid #e2e2e2;border-bottom:1px solid #e6e6e6;background:linear-gradient(#fff,#fbfbfb 60%,#f3f3f3);line-height:20px;padding-left:3px;white-space:nowrap;overflow:hidden"><span class="t">genutzt</span></div>
<div style="position:absolute;left:365px;top:603px;width:65px;height:19px;box-sizing:border-box;border-right:1px solid #e2e2e2;border-bottom:1px solid #e6e6e6;background:linear-gradient(#fff,#fbfbfb 60%,#f3f3f3);line-height:20px;padding-left:3px;white-space:nowrap;overflow:hidden"><span class="t">berechnet</span></div>
<div style="position:absolute;left:430px;top:603px;width:43px;height:19px;box-sizing:border-box;border-right:1px solid #e2e2e2;border-bottom:1px solid #e6e6e6;background:linear-gradient(#fff,#fbfbfb 60%,#f3f3f3);line-height:20px;padding-left:3px;white-space:nowrap;overflow:hidden"><span class="t">Einheit</span></div>
<div style="position:absolute;left:473px;top:603px;width:76px;height:19px;box-sizing:border-box;border-right:1px solid #e2e2e2;border-bottom:1px solid #e6e6e6;background:linear-gradient(#fff,#fbfbfb 60%,#f3f3f3);line-height:20px;padding-left:3px;white-space:nowrap;overflow:hidden"><span class="t">Netto</span></div>
<div style="position:absolute;left:549px;top:603px;width:70px;height:19px;box-sizing:border-box;border-right:1px solid #e2e2e2;border-bottom:1px solid #e6e6e6;background:linear-gradient(#fff,#fbfbfb 60%,#f3f3f3);line-height:20px;padding-left:3px;white-space:nowrap;overflow:hidden"><span class="t">Brutto</span></div>
<div style="position:absolute;left:619px;top:603px;width:27px;height:19px;box-sizing:border-box;border-right:1px solid #e2e2e2;border-bottom:1px solid #e6e6e6;background:linear-gradient(#fff,#fbfbfb 60%,#f3f3f3);line-height:20px;padding-left:3px;white-space:nowrap;overflow:hidden"><span class="t">%</span></div>
<div style="position:absolute;left:646px;top:603px;width:85px;height:19px;box-sizing:border-box;border-right:1px solid #e2e2e2;border-bottom:1px solid #e6e6e6;background:linear-gradient(#fff,#fbfbfb 60%,#f3f3f3);line-height:20px;padding-left:3px;white-space:nowrap;overflow:hidden"><span class="t">Gesamt</span></div>
<div style="position:absolute;left:731px;top:603px;width:44px;height:19px;box-sizing:border-box;border-right:1px solid #e2e2e2;border-bottom:1px solid #e6e6e6;background:linear-gradient(#fff,#fbfbfb 60%,#f3f3f3);line-height:20px;padding-left:3px;white-space:nowrap;overflow:hidden"><span class="t">Kmfrei</span></div>
<div style="position:absolute;left:775px;top:603px;width:106px;height:19px;box-sizing:border-box;border-right:1px solid #e2e2e2;border-bottom:1px solid #e6e6e6;background:linear-gradient(#fff,#fbfbfb 60%,#f3f3f3);line-height:20px;padding-left:3px;white-space:nowrap;overflow:hidden"><span class="t">ZusKM</span></div>
<div style="position:absolute;left:881px;top:603px;width:46px;height:19px;box-sizing:border-box;border-right:1px solid #e2e2e2;border-bottom:1px solid #e6e6e6;background:linear-gradient(#fff,#fbfbfb 60%,#f3f3f3);line-height:20px;padding-left:3px;white-space:nowrap;overflow:hidden"><span class="t">ZusEinh</span></div>
<div style="position:absolute;left:927px;top:603px;width:40px;height:19px;box-sizing:border-box;border-right:1px solid #e2e2e2;border-bottom:1px solid #e6e6e6;background:linear-gradient(#fff,#fbfbfb 60%,#f3f3f3);line-height:20px;padding-left:3px;white-space:nowrap;overflow:hidden"><span class="t">RE-K</span></div>
<div style="position:absolute;left:12px;top:622px;width:12px;height:19px;box-sizing:border-box;border-right:1px solid #a0a0a0;border-bottom:1px solid #a0a0a0;background:#f0f0f0;color:#000;text-align:left;line-height:20px;padding:0 3px 0 2px;white-space:nowrap;overflow:hidden"><svg width="6" height="9" viewBox="0 0 6 9" style="position:absolute;left:4px;top:5px"><path d="M0 0 L5.5 4.5 L0 9Z" fill="#000"/></svg></div>
<div style="position:absolute;left:24px;top:622px;width:38px;height:19px;box-sizing:border-box;border-right:1px solid #a0a0a0;border-bottom:1px solid #a0a0a0;background:#f0f0f0;color:#000;text-align:right;line-height:20px;padding:0 3px 0 2px;white-space:nowrap;overflow:hidden"><span class="t tr" style="position:absolute;right:2px;top:0">1</span></div>
<div style="position:absolute;left:62px;top:622px;width:100px;height:19px;box-sizing:border-box;border-right:1px solid #a0a0a0;border-bottom:1px solid #a0a0a0;background:#3399ff;color:#fff;text-align:left;line-height:20px;padding:0 3px 0 2px;white-space:nowrap;overflow:hidden"><div style="overflow:hidden;height:18px;margin-right:-1px"><span class="t">[WST]PT100</span></div></div>
<div style="position:absolute;left:162px;top:622px;width:27px;height:19px;box-sizing:border-box;border-right:1px solid #a0a0a0;border-bottom:1px solid #a0a0a0;background:#3399ff;color:#fff;text-align:left;line-height:20px;padding:0 3px 0 2px;white-space:nowrap;overflow:hidden"><div style="overflow:hidden;height:18px;margin-right:-1px"><span class="t">A</span></div></div>
<div style="position:absolute;left:189px;top:622px;width:128px;height:19px;box-sizing:border-box;border-right:1px solid #a0a0a0;border-bottom:1px solid #a0a0a0;background:#3399ff;color:#fff;text-align:left;line-height:20px;padding:0 3px 0 2px;white-space:nowrap;overflow:hidden"><div style="overflow:hidden;height:18px;margin-right:-1px"><span class="t">PKW Tagestarif inkl. 100 l</span></div></div>
<div style="position:absolute;left:317px;top:622px;width:48px;height:19px;box-sizing:border-box;border-right:1px solid #a0a0a0;border-bottom:1px solid #a0a0a0;background:#3399ff;color:#fff;text-align:right;line-height:20px;padding:0 3px 0 2px;white-space:nowrap;overflow:hidden"><span class="t tr" style="position:absolute;right:2px;top:0">1,00</span></div>
<div style="position:absolute;left:365px;top:622px;width:65px;height:19px;box-sizing:border-box;border-right:1px solid #a0a0a0;border-bottom:1px solid #a0a0a0;background:#3399ff;color:#fff;text-align:right;line-height:20px;padding:0 3px 0 2px;white-space:nowrap;overflow:hidden"><span class="t tr" style="position:absolute;right:2px;top:0">1,00</span></div>
<div style="position:absolute;left:430px;top:622px;width:43px;height:19px;box-sizing:border-box;border-right:1px solid #a0a0a0;border-bottom:1px solid #a0a0a0;background:#3399ff;color:#fff;text-align:left;line-height:20px;padding:0 3px 0 2px;white-space:nowrap;overflow:hidden"><div style="overflow:hidden;height:18px;margin-right:-1px"><span class="t">Tage</span></div></div>
<div style="position:absolute;left:473px;top:622px;width:76px;height:19px;box-sizing:border-box;border-right:1px solid #a0a0a0;border-bottom:1px solid #a0a0a0;background:#3399ff;color:#fff;text-align:right;line-height:20px;padding:0 3px 0 2px;white-space:nowrap;overflow:hidden"><span class="t tr" style="position:absolute;right:2px;top:0">25,00 €</span></div>
<div style="position:absolute;left:549px;top:622px;width:70px;height:19px;box-sizing:border-box;border-right:1px solid #a0a0a0;border-bottom:1px solid #a0a0a0;background:#3399ff;color:#fff;text-align:right;line-height:20px;padding:0 3px 0 2px;white-space:nowrap;overflow:hidden"><span class="t tr" style="position:absolute;right:2px;top:0">29,75 €</span></div>
<div style="position:absolute;left:619px;top:622px;width:27px;height:19px;box-sizing:border-box;border-right:1px solid #a0a0a0;border-bottom:1px solid #a0a0a0;background:#3399ff;color:#fff;text-align:left;line-height:20px;padding:0 3px 0 2px;white-space:nowrap;overflow:hidden"><div style="overflow:hidden;height:18px;margin-right:-1px"></div></div>
<div style="position:absolute;left:646px;top:622px;width:85px;height:19px;box-sizing:border-box;border-right:1px solid #a0a0a0;border-bottom:1px solid #a0a0a0;background:#3399ff;color:#fff;text-align:right;line-height:20px;padding:0 3px 0 2px;white-space:nowrap;overflow:hidden"><span class="t tr" style="position:absolute;right:2px;top:0">25,00 €</span></div>
<div style="position:absolute;left:731px;top:622px;width:44px;height:19px;box-sizing:border-box;border-right:1px solid #a0a0a0;border-bottom:1px solid #a0a0a0;background:#3399ff;color:#fff;text-align:left;line-height:20px;padding:0 3px 0 2px;white-space:nowrap;overflow:hidden"><div style="overflow:hidden;height:18px;margin-right:-1px"></div></div>
<div style="position:absolute;left:775px;top:622px;width:106px;height:19px;box-sizing:border-box;border-right:1px solid #a0a0a0;border-bottom:1px solid #a0a0a0;background:#3399ff;color:#fff;text-align:left;line-height:20px;padding:0 3px 0 2px;white-space:nowrap;overflow:hidden"><div style="overflow:hidden;height:18px;margin-right:-1px"></div></div>
<div style="position:absolute;left:881px;top:622px;width:46px;height:19px;box-sizing:border-box;border-right:1px solid #a0a0a0;border-bottom:1px solid #a0a0a0;background:#3399ff;color:#fff;text-align:right;line-height:20px;padding:0 3px 0 2px;white-space:nowrap;overflow:hidden"><span class="t tr" style="position:absolute;right:2px;top:0">0,00 €</span></div>
<div style="position:absolute;left:927px;top:622px;width:40px;height:19px;box-sizing:border-box;border-right:1px solid #a0a0a0;border-bottom:1px solid #a0a0a0;background:#3399ff;color:#fff;text-align:center;line-height:20px;padding:0 3px 0 2px;white-space:nowrap;overflow:hidden"><span style="display:inline-block;width:13px;height:13px;box-sizing:border-box;border:1px solid #6e6e6e;background:#fff;vertical-align:top;margin-top:2px"></span></div>
<div style="position:absolute;left:12px;top:641px;width:12px;height:19px;box-sizing:border-box;border-right:1px solid #a0a0a0;border-bottom:1px solid #a0a0a0;background:#f0f0f0;color:#000;text-align:left;line-height:20px;padding:0 3px 0 2px;white-space:nowrap;overflow:hidden"><div style="overflow:hidden;height:18px;margin-right:-1px"></div></div>
<div style="position:absolute;left:24px;top:641px;width:38px;height:19px;box-sizing:border-box;border-right:1px solid #a0a0a0;border-bottom:1px solid #a0a0a0;background:#fff;color:#000;text-align:right;line-height:20px;padding:0 3px 0 2px;white-space:nowrap;overflow:hidden"><span class="t tr" style="position:absolute;right:2px;top:0">2</span></div>
<div style="position:absolute;left:62px;top:641px;width:100px;height:19px;box-sizing:border-box;border-right:1px solid #a0a0a0;border-bottom:1px solid #a0a0a0;background:#fff;color:#000;text-align:left;line-height:20px;padding:0 3px 0 2px;white-space:nowrap;overflow:hidden"><div style="overflow:hidden;height:18px;margin-right:-1px"><span class="t">ZUST</span></div></div>
<div style="position:absolute;left:162px;top:641px;width:27px;height:19px;box-sizing:border-box;border-right:1px solid #a0a0a0;border-bottom:1px solid #a0a0a0;background:#fff;color:#000;text-align:left;line-height:20px;padding:0 3px 0 2px;white-space:nowrap;overflow:hidden"><div style="overflow:hidden;height:18px;margin-right:-1px"><span class="t">*</span></div></div>
<div style="position:absolute;left:189px;top:641px;width:128px;height:19px;box-sizing:border-box;border-right:1px solid #a0a0a0;border-bottom:1px solid #a0a0a0;background:#fff;color:#000;text-align:left;line-height:20px;padding:0 3px 0 2px;white-space:nowrap;overflow:hidden"><div style="overflow:hidden;height:18px;margin-right:-1px"><span class="t">Zustellung</span></div></div>
<div style="position:absolute;left:317px;top:641px;width:48px;height:19px;box-sizing:border-box;border-right:1px solid #a0a0a0;border-bottom:1px solid #a0a0a0;background:#ffc8c8;color:#000;text-align:right;line-height:20px;padding:0 3px 0 2px;white-space:nowrap;overflow:hidden"><span class="t tr" style="position:absolute;right:2px;top:0">0,00</span></div>
<div style="position:absolute;left:365px;top:641px;width:65px;height:19px;box-sizing:border-box;border-right:1px solid #a0a0a0;border-bottom:1px solid #a0a0a0;background:#fff;color:#000;text-align:right;line-height:20px;padding:0 3px 0 2px;white-space:nowrap;overflow:hidden"><span class="t tr" style="position:absolute;right:2px;top:0">1,00</span></div>
<div style="position:absolute;left:430px;top:641px;width:43px;height:19px;box-sizing:border-box;border-right:1px solid #a0a0a0;border-bottom:1px solid #a0a0a0;background:#fff;color:#000;text-align:left;line-height:20px;padding:0 3px 0 2px;white-space:nowrap;overflow:hidden"><div style="overflow:hidden;height:18px;margin-right:-1px"><span class="t">Kilomete</span></div></div>
<div style="position:absolute;left:473px;top:641px;width:76px;height:19px;box-sizing:border-box;border-right:1px solid #a0a0a0;border-bottom:1px solid #a0a0a0;background:#fff;color:#000;text-align:right;line-height:20px;padding:0 3px 0 2px;white-space:nowrap;overflow:hidden"><span class="t tr" style="position:absolute;right:2px;top:0">0,92 €</span></div>
<div style="position:absolute;left:549px;top:641px;width:70px;height:19px;box-sizing:border-box;border-right:1px solid #a0a0a0;border-bottom:1px solid #a0a0a0;background:#fff;color:#000;text-align:right;line-height:20px;padding:0 3px 0 2px;white-space:nowrap;overflow:hidden"><span class="t tr" style="position:absolute;right:2px;top:0">1,10 €</span></div>
<div style="position:absolute;left:619px;top:641px;width:27px;height:19px;box-sizing:border-box;border-right:1px solid #a0a0a0;border-bottom:1px solid #a0a0a0;background:#fff;color:#000;text-align:left;line-height:20px;padding:0 3px 0 2px;white-space:nowrap;overflow:hidden"><div style="overflow:hidden;height:18px;margin-right:-1px"></div></div>
<div style="position:absolute;left:646px;top:641px;width:85px;height:19px;box-sizing:border-box;border-right:1px solid #a0a0a0;border-bottom:1px solid #a0a0a0;background:#ffc8c8;color:#000;text-align:right;line-height:20px;padding:0 3px 0 2px;white-space:nowrap;overflow:hidden"><span class="t tr" style="position:absolute;right:2px;top:0">0,92 €</span></div>
<div style="position:absolute;left:731px;top:641px;width:44px;height:19px;box-sizing:border-box;border-right:1px solid #a0a0a0;border-bottom:1px solid #a0a0a0;background:#fff;color:#000;text-align:left;line-height:20px;padding:0 3px 0 2px;white-space:nowrap;overflow:hidden"><div style="overflow:hidden;height:18px;margin-right:-1px"></div></div>
<div style="position:absolute;left:775px;top:641px;width:106px;height:19px;box-sizing:border-box;border-right:1px solid #a0a0a0;border-bottom:1px solid #a0a0a0;background:#fff;color:#000;text-align:left;line-height:20px;padding:0 3px 0 2px;white-space:nowrap;overflow:hidden"><div style="overflow:hidden;height:18px;margin-right:-1px"></div></div>
<div style="position:absolute;left:881px;top:641px;width:46px;height:19px;box-sizing:border-box;border-right:1px solid #a0a0a0;border-bottom:1px solid #a0a0a0;background:#fff;color:#000;text-align:right;line-height:20px;padding:0 3px 0 2px;white-space:nowrap;overflow:hidden"><span class="t tr" style="position:absolute;right:2px;top:0">0,00 €</span></div>
<div style="position:absolute;left:927px;top:641px;width:40px;height:19px;box-sizing:border-box;border-right:1px solid #a0a0a0;border-bottom:1px solid #a0a0a0;background:#fff;color:#000;text-align:center;line-height:20px;padding:0 3px 0 2px;white-space:nowrap;overflow:hidden"><span style="display:inline-block;width:13px;height:13px;box-sizing:border-box;border:1px solid #6e6e6e;background:#fff;vertical-align:top;margin-top:2px"></span></div>
<div style="position:absolute;left:12px;top:660px;width:12px;height:19px;box-sizing:border-box;border-right:1px solid #a0a0a0;border-bottom:1px solid #a0a0a0;background:#f0f0f0;color:#000;text-align:left;line-height:20px;padding:0 3px 0 2px;white-space:nowrap;overflow:hidden"><div style="overflow:hidden;height:18px;margin-right:-1px"></div></div>
<div style="position:absolute;left:24px;top:660px;width:38px;height:19px;box-sizing:border-box;border-right:1px solid #a0a0a0;border-bottom:1px solid #a0a0a0;background:#f0f0f0;color:#000;text-align:right;line-height:20px;padding:0 3px 0 2px;white-space:nowrap;overflow:hidden"><span class="t tr" style="position:absolute;right:2px;top:0">3</span></div>
<div style="position:absolute;left:62px;top:660px;width:100px;height:19px;box-sizing:border-box;border-right:1px solid #a0a0a0;border-bottom:1px solid #a0a0a0;background:#f0f0f0;color:#000;text-align:left;line-height:20px;padding:0 3px 0 2px;white-space:nowrap;overflow:hidden"><div style="overflow:hidden;height:18px;margin-right:-1px"><span class="t">ABH</span></div></div>
<div style="position:absolute;left:162px;top:660px;width:27px;height:19px;box-sizing:border-box;border-right:1px solid #a0a0a0;border-bottom:1px solid #a0a0a0;background:#f0f0f0;color:#000;text-align:left;line-height:20px;padding:0 3px 0 2px;white-space:nowrap;overflow:hidden"><div style="overflow:hidden;height:18px;margin-right:-1px"><span class="t">*</span></div></div>
<div style="position:absolute;left:189px;top:660px;width:128px;height:19px;box-sizing:border-box;border-right:1px solid #a0a0a0;border-bottom:1px solid #a0a0a0;background:#f0f0f0;color:#000;text-align:left;line-height:20px;padding:0 3px 0 2px;white-space:nowrap;overflow:hidden"><div style="overflow:hidden;height:18px;margin-right:-1px"><span class="t">Abholung (nur im Kreis Mir</span></div></div>
<div style="position:absolute;left:317px;top:660px;width:48px;height:19px;box-sizing:border-box;border-right:1px solid #a0a0a0;border-bottom:1px solid #a0a0a0;background:#ffc8c8;color:#000;text-align:right;line-height:20px;padding:0 3px 0 2px;white-space:nowrap;overflow:hidden"><span class="t tr" style="position:absolute;right:2px;top:0">0,00</span></div>
<div style="position:absolute;left:365px;top:660px;width:65px;height:19px;box-sizing:border-box;border-right:1px solid #a0a0a0;border-bottom:1px solid #a0a0a0;background:#f0f0f0;color:#000;text-align:right;line-height:20px;padding:0 3px 0 2px;white-space:nowrap;overflow:hidden"><span class="t tr" style="position:absolute;right:2px;top:0">1,00</span></div>
<div style="position:absolute;left:430px;top:660px;width:43px;height:19px;box-sizing:border-box;border-right:1px solid #a0a0a0;border-bottom:1px solid #a0a0a0;background:#f0f0f0;color:#000;text-align:left;line-height:20px;padding:0 3px 0 2px;white-space:nowrap;overflow:hidden"><div style="overflow:hidden;height:18px;margin-right:-1px"><span class="t">Kilomete</span></div></div>
<div style="position:absolute;left:473px;top:660px;width:76px;height:19px;box-sizing:border-box;border-right:1px solid #a0a0a0;border-bottom:1px solid #a0a0a0;background:#f0f0f0;color:#000;text-align:right;line-height:20px;padding:0 3px 0 2px;white-space:nowrap;overflow:hidden"><span class="t tr" style="position:absolute;right:2px;top:0">0,92 €</span></div>
<div style="position:absolute;left:549px;top:660px;width:70px;height:19px;box-sizing:border-box;border-right:1px solid #a0a0a0;border-bottom:1px solid #a0a0a0;background:#f0f0f0;color:#000;text-align:right;line-height:20px;padding:0 3px 0 2px;white-space:nowrap;overflow:hidden"><span class="t tr" style="position:absolute;right:2px;top:0">1,10 €</span></div>
<div style="position:absolute;left:619px;top:660px;width:27px;height:19px;box-sizing:border-box;border-right:1px solid #a0a0a0;border-bottom:1px solid #a0a0a0;background:#f0f0f0;color:#000;text-align:left;line-height:20px;padding:0 3px 0 2px;white-space:nowrap;overflow:hidden"><div style="overflow:hidden;height:18px;margin-right:-1px"></div></div>
<div style="position:absolute;left:646px;top:660px;width:85px;height:19px;box-sizing:border-box;border-right:1px solid #a0a0a0;border-bottom:1px solid #a0a0a0;background:#ffc8c8;color:#000;text-align:right;line-height:20px;padding:0 3px 0 2px;white-space:nowrap;overflow:hidden"><span class="t tr" style="position:absolute;right:2px;top:0">0,92 €</span></div>
<div style="position:absolute;left:731px;top:660px;width:44px;height:19px;box-sizing:border-box;border-right:1px solid #a0a0a0;border-bottom:1px solid #a0a0a0;background:#f0f0f0;color:#000;text-align:left;line-height:20px;padding:0 3px 0 2px;white-space:nowrap;overflow:hidden"><div style="overflow:hidden;height:18px;margin-right:-1px"></div></div>
<div style="position:absolute;left:775px;top:660px;width:106px;height:19px;box-sizing:border-box;border-right:1px solid #a0a0a0;border-bottom:1px solid #a0a0a0;background:#f0f0f0;color:#000;text-align:left;line-height:20px;padding:0 3px 0 2px;white-space:nowrap;overflow:hidden"><div style="overflow:hidden;height:18px;margin-right:-1px"></div></div>
<div style="position:absolute;left:881px;top:660px;width:46px;height:19px;box-sizing:border-box;border-right:1px solid #a0a0a0;border-bottom:1px solid #a0a0a0;background:#f0f0f0;color:#000;text-align:right;line-height:20px;padding:0 3px 0 2px;white-space:nowrap;overflow:hidden"><span class="t tr" style="position:absolute;right:2px;top:0">0,00 €</span></div>
<div style="position:absolute;left:927px;top:660px;width:40px;height:19px;box-sizing:border-box;border-right:1px solid #a0a0a0;border-bottom:1px solid #a0a0a0;background:#f0f0f0;color:#000;text-align:center;line-height:20px;padding:0 3px 0 2px;white-space:nowrap;overflow:hidden"><span style="display:inline-block;width:13px;height:13px;box-sizing:border-box;border:1px solid #6e6e6e;background:#fff;vertical-align:top;margin-top:2px"></span></div>
<div style="position:absolute;left:12px;top:679px;width:12px;height:19px;box-sizing:border-box;border-right:1px solid #a0a0a0;border-bottom:1px solid #a0a0a0;background:#f0f0f0;color:#000;text-align:left;line-height:20px;padding:0 3px 0 2px;white-space:nowrap;overflow:hidden"><div style="overflow:hidden;height:18px;margin-right:-1px"></div></div>
<div style="position:absolute;left:24px;top:679px;width:38px;height:19px;box-sizing:border-box;border-right:1px solid #a0a0a0;border-bottom:1px solid #a0a0a0;background:#ffc8c8;color:#000;text-align:right;line-height:20px;padding:0 3px 0 2px;white-space:nowrap;overflow:hidden"><span class="t tr" style="position:absolute;right:2px;top:0">99991</span></div>
<div style="position:absolute;left:62px;top:679px;width:100px;height:19px;box-sizing:border-box;border-right:1px solid #a0a0a0;border-bottom:1px solid #a0a0a0;background:#ffc8c8;color:#000;text-align:left;line-height:20px;padding:0 3px 0 2px;white-space:nowrap;overflow:hidden"><div style="overflow:hidden;height:18px;margin-right:-1px"><span class="t">NS.</span></div></div>
<div style="position:absolute;left:162px;top:679px;width:27px;height:19px;box-sizing:border-box;border-right:1px solid #a0a0a0;border-bottom:1px solid #a0a0a0;background:#ffc8c8;color:#000;text-align:left;line-height:20px;padding:0 3px 0 2px;white-space:nowrap;overflow:hidden"><div style="overflow:hidden;height:18px;margin-right:-1px"></div></div>
<div style="position:absolute;left:189px;top:679px;width:128px;height:19px;box-sizing:border-box;border-right:1px solid #a0a0a0;border-bottom:1px solid #a0a0a0;background:#ffc8c8;color:#000;text-align:left;line-height:20px;padding:0 3px 0 2px;white-space:nowrap;overflow:hidden"><div style="overflow:hidden;height:18px;margin-right:-1px"><span class="t">Nettosumme</span></div></div>
<div style="position:absolute;left:317px;top:679px;width:48px;height:19px;box-sizing:border-box;border-right:1px solid #a0a0a0;border-bottom:1px solid #a0a0a0;background:#ffc8c8;color:#000;text-align:right;line-height:20px;padding:0 3px 0 2px;white-space:nowrap;overflow:hidden"><span class="t tr" style="position:absolute;right:2px;top:0"></span></div>
<div style="position:absolute;left:365px;top:679px;width:65px;height:19px;box-sizing:border-box;border-right:1px solid #a0a0a0;border-bottom:1px solid #a0a0a0;background:#ffc8c8;color:#000;text-align:right;line-height:20px;padding:0 3px 0 2px;white-space:nowrap;overflow:hidden"><span class="t tr" style="position:absolute;right:2px;top:0"></span></div>
<div style="position:absolute;left:430px;top:679px;width:43px;height:19px;box-sizing:border-box;border-right:1px solid #a0a0a0;border-bottom:1px solid #a0a0a0;background:#ffc8c8;color:#000;text-align:left;line-height:20px;padding:0 3px 0 2px;white-space:nowrap;overflow:hidden"><div style="overflow:hidden;height:18px;margin-right:-1px"></div></div>
<div style="position:absolute;left:473px;top:679px;width:76px;height:19px;box-sizing:border-box;border-right:1px solid #a0a0a0;border-bottom:1px solid #a0a0a0;background:#ffc8c8;color:#000;text-align:right;line-height:20px;padding:0 3px 0 2px;white-space:nowrap;overflow:hidden"><span class="t tr" style="position:absolute;right:2px;top:0"></span></div>
<div style="position:absolute;left:549px;top:679px;width:70px;height:19px;box-sizing:border-box;border-right:1px solid #a0a0a0;border-bottom:1px solid #a0a0a0;background:#ffc8c8;color:#000;text-align:right;line-height:20px;padding:0 3px 0 2px;white-space:nowrap;overflow:hidden"><span class="t tr" style="position:absolute;right:2px;top:0"></span></div>
<div style="position:absolute;left:619px;top:679px;width:27px;height:19px;box-sizing:border-box;border-right:1px solid #a0a0a0;border-bottom:1px solid #a0a0a0;background:#ffc8c8;color:#000;text-align:left;line-height:20px;padding:0 3px 0 2px;white-space:nowrap;overflow:hidden"><div style="overflow:hidden;height:18px;margin-right:-1px"></div></div>
<div style="position:absolute;left:646px;top:679px;width:85px;height:19px;box-sizing:border-box;border-right:1px solid #a0a0a0;border-bottom:1px solid #a0a0a0;background:#ffc8c8;color:#000;text-align:right;line-height:20px;padding:0 3px 0 2px;white-space:nowrap;overflow:hidden"><span class="t tr" style="position:absolute;right:2px;top:0">26,85 €</span></div>
<div style="position:absolute;left:731px;top:679px;width:44px;height:19px;box-sizing:border-box;border-right:1px solid #a0a0a0;border-bottom:1px solid #a0a0a0;background:#ffc8c8;color:#000;text-align:left;line-height:20px;padding:0 3px 0 2px;white-space:nowrap;overflow:hidden"><div style="overflow:hidden;height:18px;margin-right:-1px"></div></div>
<div style="position:absolute;left:775px;top:679px;width:106px;height:19px;box-sizing:border-box;border-right:1px solid #a0a0a0;border-bottom:1px solid #a0a0a0;background:#ffc8c8;color:#000;text-align:left;line-height:20px;padding:0 3px 0 2px;white-space:nowrap;overflow:hidden"><div style="overflow:hidden;height:18px;margin-right:-1px"></div></div>
<div style="position:absolute;left:881px;top:679px;width:46px;height:19px;box-sizing:border-box;border-right:1px solid #a0a0a0;border-bottom:1px solid #a0a0a0;background:#ffc8c8;color:#000;text-align:right;line-height:20px;padding:0 3px 0 2px;white-space:nowrap;overflow:hidden"><span class="t tr" style="position:absolute;right:2px;top:0"></span></div>
<div style="position:absolute;left:927px;top:679px;width:40px;height:19px;box-sizing:border-box;border-right:1px solid #a0a0a0;border-bottom:1px solid #a0a0a0;background:#ffc8c8;color:#000;text-align:center;line-height:20px;padding:0 3px 0 2px;white-space:nowrap;overflow:hidden"><span style="display:inline-block;width:13px;height:13px;box-sizing:border-box;border:1px solid #6e6e6e;background:#fff;vertical-align:top;margin-top:2px"></span></div>
<div style="position:absolute;left:12px;top:698px;width:12px;height:19px;box-sizing:border-box;border-right:1px solid #a0a0a0;border-bottom:1px solid #a0a0a0;background:#f0f0f0;color:#000;text-align:left;line-height:20px;padding:0 3px 0 2px;white-space:nowrap;overflow:hidden"><div style="overflow:hidden;height:18px;margin-right:-1px"></div></div>
<div style="position:absolute;left:24px;top:698px;width:38px;height:19px;box-sizing:border-box;border-right:1px solid #a0a0a0;border-bottom:1px solid #a0a0a0;background:#ffd2d2;color:#000;text-align:right;line-height:20px;padding:0 3px 0 2px;white-space:nowrap;overflow:hidden"><span class="t tr" style="position:absolute;right:2px;top:0">99992</span></div>
<div style="position:absolute;left:62px;top:698px;width:100px;height:19px;box-sizing:border-box;border-right:1px solid #a0a0a0;border-bottom:1px solid #a0a0a0;background:#ffd2d2;color:#000;text-align:left;line-height:20px;padding:0 3px 0 2px;white-space:nowrap;overflow:hidden"><div style="overflow:hidden;height:18px;margin-right:-1px"><span class="t">USt.</span></div></div>
<div style="position:absolute;left:162px;top:698px;width:27px;height:19px;box-sizing:border-box;border-right:1px solid #a0a0a0;border-bottom:1px solid #a0a0a0;background:#ffd2d2;color:#000;text-align:left;line-height:20px;padding:0 3px 0 2px;white-space:nowrap;overflow:hidden"><div style="overflow:hidden;height:18px;margin-right:-1px"></div></div>
<div style="position:absolute;left:189px;top:698px;width:128px;height:19px;box-sizing:border-box;border-right:1px solid #a0a0a0;border-bottom:1px solid #a0a0a0;background:#ffd2d2;color:#000;text-align:left;line-height:20px;padding:0 3px 0 2px;white-space:nowrap;overflow:hidden"><div style="overflow:hidden;height:18px;margin-right:-1px"><span class="t">Umsatzsteuer&nbsp; 19 %</span></div></div>
<div style="position:absolute;left:317px;top:698px;width:48px;height:19px;box-sizing:border-box;border-right:1px solid #a0a0a0;border-bottom:1px solid #a0a0a0;background:#ffd2d2;color:#000;text-align:right;line-height:20px;padding:0 3px 0 2px;white-space:nowrap;overflow:hidden"><span class="t tr" style="position:absolute;right:2px;top:0"></span></div>
<div style="position:absolute;left:365px;top:698px;width:65px;height:19px;box-sizing:border-box;border-right:1px solid #a0a0a0;border-bottom:1px solid #a0a0a0;background:#ffd2d2;color:#000;text-align:right;line-height:20px;padding:0 3px 0 2px;white-space:nowrap;overflow:hidden"><span class="t tr" style="position:absolute;right:2px;top:0"></span></div>
<div style="position:absolute;left:430px;top:698px;width:43px;height:19px;box-sizing:border-box;border-right:1px solid #a0a0a0;border-bottom:1px solid #a0a0a0;background:#ffd2d2;color:#000;text-align:left;line-height:20px;padding:0 3px 0 2px;white-space:nowrap;overflow:hidden"><div style="overflow:hidden;height:18px;margin-right:-1px"></div></div>
<div style="position:absolute;left:473px;top:698px;width:76px;height:19px;box-sizing:border-box;border-right:1px solid #a0a0a0;border-bottom:1px solid #a0a0a0;background:#ffd2d2;color:#000;text-align:right;line-height:20px;padding:0 3px 0 2px;white-space:nowrap;overflow:hidden"><span class="t tr" style="position:absolute;right:2px;top:0">26,85 €</span></div>
<div style="position:absolute;left:549px;top:698px;width:70px;height:19px;box-sizing:border-box;border-right:1px solid #a0a0a0;border-bottom:1px solid #a0a0a0;background:#ffd2d2;color:#000;text-align:right;line-height:20px;padding:0 3px 0 2px;white-space:nowrap;overflow:hidden"><span class="t tr" style="position:absolute;right:2px;top:0"></span></div>
<div style="position:absolute;left:619px;top:698px;width:27px;height:19px;box-sizing:border-box;border-right:1px solid #a0a0a0;border-bottom:1px solid #a0a0a0;background:#ffd2d2;color:#000;text-align:left;line-height:20px;padding:0 3px 0 2px;white-space:nowrap;overflow:hidden"><div style="overflow:hidden;height:18px;margin-right:-1px"><span class="t">19,0</span></div></div>
<div style="position:absolute;left:646px;top:698px;width:85px;height:19px;box-sizing:border-box;border-right:1px solid #a0a0a0;border-bottom:1px solid #a0a0a0;background:#ffd2d2;color:#000;text-align:right;line-height:20px;padding:0 3px 0 2px;white-space:nowrap;overflow:hidden"><span class="t tr" style="position:absolute;right:2px;top:0">5,10 €</span></div>
<div style="position:absolute;left:731px;top:698px;width:44px;height:19px;box-sizing:border-box;border-right:1px solid #a0a0a0;border-bottom:1px solid #a0a0a0;background:#ffd2d2;color:#000;text-align:left;line-height:20px;padding:0 3px 0 2px;white-space:nowrap;overflow:hidden"><div style="overflow:hidden;height:18px;margin-right:-1px"></div></div>
<div style="position:absolute;left:775px;top:698px;width:106px;height:19px;box-sizing:border-box;border-right:1px solid #a0a0a0;border-bottom:1px solid #a0a0a0;background:#ffd2d2;color:#000;text-align:left;line-height:20px;padding:0 3px 0 2px;white-space:nowrap;overflow:hidden"><div style="overflow:hidden;height:18px;margin-right:-1px"></div></div>
<div style="position:absolute;left:881px;top:698px;width:46px;height:19px;box-sizing:border-box;border-right:1px solid #a0a0a0;border-bottom:1px solid #a0a0a0;background:#ffd2d2;color:#000;text-align:right;line-height:20px;padding:0 3px 0 2px;white-space:nowrap;overflow:hidden"><span class="t tr" style="position:absolute;right:2px;top:0"></span></div>
<div style="position:absolute;left:927px;top:698px;width:40px;height:19px;box-sizing:border-box;border-right:1px solid #a0a0a0;border-bottom:1px solid #a0a0a0;background:#ffd2d2;color:#000;text-align:center;line-height:20px;padding:0 3px 0 2px;white-space:nowrap;overflow:hidden"><span style="display:inline-block;width:13px;height:13px;box-sizing:border-box;border:1px solid #6e6e6e;background:#fff;vertical-align:top;margin-top:2px"></span></div>
<div style="position:absolute;left:12px;top:717px;width:12px;height:19px;box-sizing:border-box;border-right:1px solid #a0a0a0;border-bottom:1px solid #a0a0a0;background:#f0f0f0;color:#000;text-align:left;line-height:20px;padding:0 3px 0 2px;white-space:nowrap;overflow:hidden"><div style="overflow:hidden;height:18px;margin-right:-1px"></div></div>
<div style="position:absolute;left:24px;top:717px;width:38px;height:19px;box-sizing:border-box;border-right:1px solid #a0a0a0;border-bottom:1px solid #a0a0a0;background:#ffc8c8;color:#000;text-align:right;line-height:20px;padding:0 3px 0 2px;white-space:nowrap;overflow:hidden"><span class="t tr" style="position:absolute;right:2px;top:0">99993</span></div>
<div style="position:absolute;left:62px;top:717px;width:100px;height:19px;box-sizing:border-box;border-right:1px solid #a0a0a0;border-bottom:1px solid #a0a0a0;background:#ffc8c8;color:#000;text-align:left;line-height:20px;padding:0 3px 0 2px;white-space:nowrap;overflow:hidden"><div style="overflow:hidden;height:18px;margin-right:-1px"><span class="t">ES.</span></div></div>
<div style="position:absolute;left:162px;top:717px;width:27px;height:19px;box-sizing:border-box;border-right:1px solid #a0a0a0;border-bottom:1px solid #a0a0a0;background:#ffc8c8;color:#000;text-align:left;line-height:20px;padding:0 3px 0 2px;white-space:nowrap;overflow:hidden"><div style="overflow:hidden;height:18px;margin-right:-1px"></div></div>
<div style="position:absolute;left:189px;top:717px;width:128px;height:19px;box-sizing:border-box;border-right:1px solid #a0a0a0;border-bottom:1px solid #a0a0a0;background:#ffc8c8;color:#000;text-align:left;line-height:20px;padding:0 3px 0 2px;white-space:nowrap;overflow:hidden"><div style="overflow:hidden;height:18px;margin-right:-1px"><span class="t">Endsumme</span></div></div>
<div style="position:absolute;left:317px;top:717px;width:48px;height:19px;box-sizing:border-box;border-right:1px solid #a0a0a0;border-bottom:1px solid #a0a0a0;background:#ffc8c8;color:#000;text-align:right;line-height:20px;padding:0 3px 0 2px;white-space:nowrap;overflow:hidden"><span class="t tr" style="position:absolute;right:2px;top:0"></span></div>
<div style="position:absolute;left:365px;top:717px;width:65px;height:19px;box-sizing:border-box;border-right:1px solid #a0a0a0;border-bottom:1px solid #a0a0a0;background:#ffc8c8;color:#000;text-align:right;line-height:20px;padding:0 3px 0 2px;white-space:nowrap;overflow:hidden"><span class="t tr" style="position:absolute;right:2px;top:0"></span></div>
<div style="position:absolute;left:430px;top:717px;width:43px;height:19px;box-sizing:border-box;border-right:1px solid #a0a0a0;border-bottom:1px solid #a0a0a0;background:#ffc8c8;color:#000;text-align:left;line-height:20px;padding:0 3px 0 2px;white-space:nowrap;overflow:hidden"><div style="overflow:hidden;height:18px;margin-right:-1px"></div></div>
<div style="position:absolute;left:473px;top:717px;width:76px;height:19px;box-sizing:border-box;border-right:1px solid #a0a0a0;border-bottom:1px solid #a0a0a0;background:#ffc8c8;color:#000;text-align:right;line-height:20px;padding:0 3px 0 2px;white-space:nowrap;overflow:hidden"><span class="t tr" style="position:absolute;right:2px;top:0"></span></div>
<div style="position:absolute;left:549px;top:717px;width:70px;height:19px;box-sizing:border-box;border-right:1px solid #a0a0a0;border-bottom:1px solid #a0a0a0;background:#ffc8c8;color:#000;text-align:right;line-height:20px;padding:0 3px 0 2px;white-space:nowrap;overflow:hidden"><span class="t tr" style="position:absolute;right:2px;top:0"></span></div>
<div style="position:absolute;left:619px;top:717px;width:27px;height:19px;box-sizing:border-box;border-right:1px solid #a0a0a0;border-bottom:1px solid #a0a0a0;background:#ffc8c8;color:#000;text-align:left;line-height:20px;padding:0 3px 0 2px;white-space:nowrap;overflow:hidden"><div style="overflow:hidden;height:18px;margin-right:-1px"></div></div>
<div style="position:absolute;left:646px;top:717px;width:85px;height:19px;box-sizing:border-box;border-right:1px solid #a0a0a0;border-bottom:1px solid #a0a0a0;background:#ffc8c8;color:#000;text-align:right;line-height:20px;padding:0 3px 0 2px;white-space:nowrap;overflow:hidden"><span class="t tr" style="position:absolute;right:2px;top:0">31,95 €</span></div>
<div style="position:absolute;left:731px;top:717px;width:44px;height:19px;box-sizing:border-box;border-right:1px solid #a0a0a0;border-bottom:1px solid #a0a0a0;background:#ffc8c8;color:#000;text-align:left;line-height:20px;padding:0 3px 0 2px;white-space:nowrap;overflow:hidden"><div style="overflow:hidden;height:18px;margin-right:-1px"></div></div>
<div style="position:absolute;left:775px;top:717px;width:106px;height:19px;box-sizing:border-box;border-right:1px solid #a0a0a0;border-bottom:1px solid #a0a0a0;background:#ffc8c8;color:#000;text-align:left;line-height:20px;padding:0 3px 0 2px;white-space:nowrap;overflow:hidden"><div style="overflow:hidden;height:18px;margin-right:-1px"></div></div>
<div style="position:absolute;left:881px;top:717px;width:46px;height:19px;box-sizing:border-box;border-right:1px solid #a0a0a0;border-bottom:1px solid #a0a0a0;background:#ffc8c8;color:#000;text-align:right;line-height:20px;padding:0 3px 0 2px;white-space:nowrap;overflow:hidden"><span class="t tr" style="position:absolute;right:2px;top:0"></span></div>
<div style="position:absolute;left:927px;top:717px;width:40px;height:19px;box-sizing:border-box;border-right:1px solid #a0a0a0;border-bottom:1px solid #a0a0a0;background:#ffc8c8;color:#000;text-align:center;line-height:20px;padding:0 3px 0 2px;white-space:nowrap;overflow:hidden"><span style="display:inline-block;width:13px;height:13px;box-sizing:border-box;border:1px solid #6e6e6e;background:#fff;vertical-align:top;margin-top:2px"></span></div>
<div style="position:absolute;left:967px;top:603px;width:17px;height:182px;background:#fff;box-sizing:border-box;border-left:1px solid #d0d0d0"></div>
<div style="position:absolute;left:967px;top:603px;width:17px;height:19px;box-sizing:border-box;border:1px solid #c8c8c8;background:#fff;display:flex;align-items:center;justify-content:center"><svg width="9" height="8" viewBox="0 0 9 8"><path d="M0.8 6 L4.5 2.2 L8.2 6" fill="none" stroke="#505050" stroke-width="1.15"/></svg></div>
<div style="position:absolute;left:968px;top:621px;width:16px;height:79px;background:#d3d3d3;box-shadow:inset 1px 0 0 #bcbcbc"><div style="position:absolute;left:4px;top:35px;width:8px;height:1px;background:#3a3a3a;box-shadow:0 3px 0 #3a3a3a,0 6px 0 #3a3a3a"></div></div>
<div style="position:absolute;left:967px;top:767px;width:17px;height:18px;box-sizing:border-box;border:1px solid #c8c8c8;background:#fff;display:flex;align-items:center;justify-content:center"><svg width="9" height="8" viewBox="0 0 9 8"><path d="M0.8 2 L4.5 5.8 L8.2 2" fill="none" stroke="#505050" stroke-width="1.15"/></svg></div>
<div style="position:absolute;left:12px;top:785px;width:972px;height:19px;background:#f0f0f0"></div>
<div style="position:absolute;left:13px;top:786px;width:16px;height:17px;box-sizing:border-box;border:1px solid #5a5a5a;background:#dcdcdc"><svg width="16" height="16" viewBox="0 0 16 16" style="position:absolute;left:-1px;top:-1px"><path d="M8 4 V12 M4 8 H12" stroke="#1d9a12" stroke-width="2"/></svg></div>
<div style="position:absolute;left:31px;top:786px;width:16px;height:17px;box-sizing:border-box;border:1px solid #5a5a5a;background:#dcdcdc"><svg width="16" height="16" viewBox="0 0 16 16" style="position:absolute;left:-1px;top:-1px"><path d="M3.6 8 H12.4" stroke="#c4161c" stroke-width="2"/></svg></div>
<div style="position:absolute;left:49px;top:786px;width:16px;height:17px;box-sizing:border-box;border:1px solid #b8b8b8;background:#f0f0f0"><svg width="16" height="16" viewBox="0 0 16 16" style="position:absolute;left:-1px;top:-1px"><path d="M4 8.5 L7 11 L12 5" fill="none" stroke="#b5b5b5" stroke-width="1.8"/></svg></div>
<div style="position:absolute;left:67px;top:786px;width:16px;height:17px;box-sizing:border-box;border:1px solid #b8b8b8;background:#f0f0f0"><svg width="16" height="16" viewBox="0 0 16 16" style="position:absolute;left:-1px;top:-1px"><path d="M4 4 L12 12 M12 4 L4 12" stroke="#b5b5b5" stroke-width="2.2"/></svg></div>
<div style="position:absolute;left:134px;top:785px;width:833px;height:19px;background:#fff;box-sizing:border-box;border:1px solid #c8c8c8"></div>
<div style="position:absolute;left:134px;top:785px;width:17px;height:19px;box-sizing:border-box;border:1px solid #c8c8c8;background:#fff;display:flex;align-items:center;justify-content:center"><svg width="8" height="9" viewBox="0 0 8 9"><path d="M5.5 0.8 L1.8 4.5 L5.5 8.2" fill="none" stroke="#505050" stroke-width="1.15"/></svg></div>
<div style="position:absolute;left:950px;top:785px;width:17px;height:19px;box-sizing:border-box;border:1px solid #c8c8c8;background:#fff;display:flex;align-items:center;justify-content:center"><svg width="8" height="9" viewBox="0 0 8 9"><path d="M2.5 0.8 L6.2 4.5 L2.5 8.2" fill="none" stroke="#505050" stroke-width="1.15"/></svg></div>
<div class="g" style="left:988px;top:545px;width:254px;height:261px"></div>
<div class="l gt" style="left:998px;top:537px;transform:scaleX(0.842)">Zahlung (Euro) / Sonstiges</div>
<div class="l " style="left:993px;top:559px;"><span class="t">Zahlart</span></div>
<div class="c " style="left:1050px;top:555px;width:109px;height:21px;line-height:18px;"><span class="t">Rechnung</span><svg class="cv" width="9" height="6" viewBox="0 0 9 6"><path d="M0.8 0.8 L4.5 4.6 L8.2 0.8" fill="none" stroke="#3a3a3a" stroke-width="1.9"/></svg></div>
<div class="l " style="left:993px;top:584px;"><span class="t">Kontoinh.</span></div>
<div class="i " style="left:1050px;top:581px;width:148px;height:19px;line-height:17px;"></div>
<div class="l " style="left:993px;top:609px;"><span class="t">Vor.-Zahl.</span></div>
<div class="i bk" style="left:1050px;top:606px;width:79px;height:19px;line-height:17px;"><div style="position:absolute;right:2px;top:0"><span class="t tr">0,00 €</span></div></div>
<div class="b " style="left:1132px;top:606px;width:66px;height:19px;line-height:17px;"><div style="position:absolute;left:-40px;right:-40px;top:1px"><span class="t tc">Buchen(F8)</span></div></div>
<div class="l " style="left:993px;top:634px;"><span class="t" style="transform:scaleX(0.835)">Rabatt (%)</span></div>
<div class="i " style="left:1050px;top:631px;width:79px;height:19px;line-height:17px;"></div>
<div class="l " style="left:993px;top:659px;"><span class="t" style="transform:scaleX(0.892)">SB VK/TK/</span></div>
<div class="i bk" style="left:1050px;top:656px;width:62px;height:19px;line-height:17px;"><div style="position:absolute;right:2px;top:0"><span class="t tr">1.000,00 €</span></div></div>
<div class="i bk" style="left:1114px;top:656px;width:62px;height:19px;line-height:17px;"><div style="position:absolute;right:2px;top:0"><span class="t tr">0,00 €</span></div></div>
<div class="i bk" style="left:1178px;top:656px;width:62px;height:19px;line-height:17px;"><div style="position:absolute;right:2px;top:0"><span class="t tr">0,00 €</span></div></div>
<div class="k" style="left:995px;top:708px;width:13px;height:13px"></div>
<div class="l " style="left:1011px;top:708px;"><span class="t">Pers. Ausw.</span></div>
<div class="k" style="left:1123px;top:708px;width:13px;height:13px"></div>
<div class="l " style="left:1139px;top:708px;"><span class="t">Weitere Fah.</span></div>
<div class="k" style="left:995px;top:726px;width:13px;height:13px"></div>
<div class="l " style="left:1011px;top:726px;"><span class="t">Führerschein</span></div>
</body></html>
